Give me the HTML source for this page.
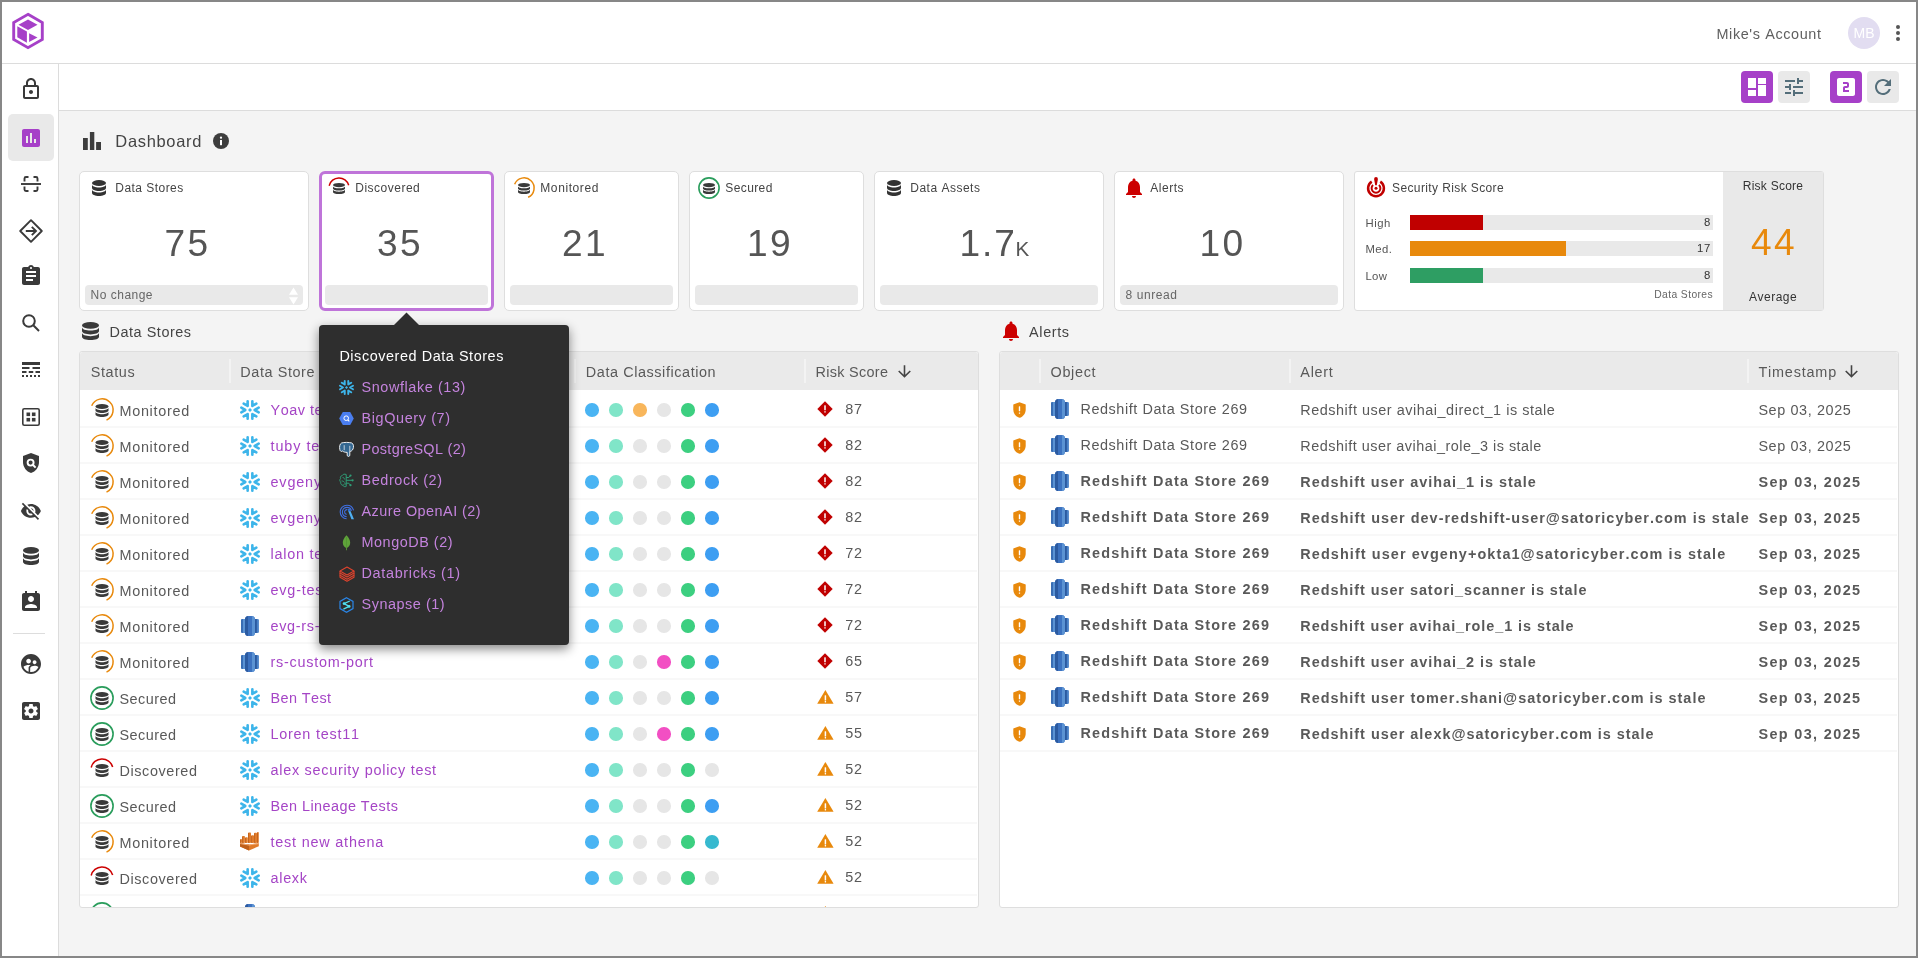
<!DOCTYPE html>
<html><head><meta charset="utf-8"><title>Dashboard</title>
<style>
html,body{margin:0;padding:0;width:1918px;height:958px;overflow:hidden;background:#f4f4f4}
body{position:relative;font-family:"Liberation Sans",sans-serif}
.bx,.tx,.ic,.clip{position:absolute}
.clip{left:0;top:0;width:1918px;height:958px}
.tx{white-space:nowrap;line-height:1;font-kerning:none}
.ic{overflow:visible}
</style></head><body><div id="root" style="position:absolute;left:0;top:0;width:1918px;height:958px;will-change:transform">
<div class="bx" style="left:0px;top:0px;width:1918px;height:958px;background:#878787"></div>
<div class="bx" style="left:2px;top:2px;width:1914px;height:954px;background:#f4f4f4"></div>
<div class="bx" style="left:2px;top:2px;width:1914px;height:61px;background:#fff"></div>
<div class="bx" style="left:2px;top:63px;width:1914px;height:1px;background:#dcdcdc"></div>
<div class="bx" style="left:2px;top:64px;width:56px;height:892px;background:#fff"></div>
<div class="bx" style="left:58px;top:64px;width:1px;height:892px;background:#dcdcdc"></div>
<div class="bx" style="left:59px;top:64px;width:1857px;height:46px;background:#fff"></div>
<div class="bx" style="left:59px;top:110px;width:1857px;height:1px;background:#dcdcdc"></div>
<svg class="ic" style="left:12px;top:13px" width="32" height="36" viewBox="0 0 32 36"><path d="M16 1.3L30.3 9.5V26.5L16 34.7L1.7 26.5V9.5Z" fill="none" stroke="#a640c8" stroke-width="2.9"/><path d="M16 6.5L25.5 11.8L16 17L6.5 11.8Z" fill="#a640c8"/><path d="M5.3 13.2L14.9 18.5V29.8L5.3 24.3Z" fill="#a640c8"/><path d="M17.1 20.2L25.5 24.5L17.1 29Z" fill="#a640c8"/></svg>
<div class="tx " style="left:1716.50px;top:26.79px;font-size:14.42px;letter-spacing:0.613px;color:#5f5f5f;">Mike's Account</div>
<div class="bx" style="left:1848px;top:17px;width:32px;height:32px;border-radius:50%;background:#e2ddf1"></div>
<div class="tx " style="left:1853.47px;top:26.14px;font-size:14.01px;letter-spacing:0.025px;color:#ffffff;">MB</div>
<div class="bx" style="left:1896px;top:25px;width:4px;height:4px;border-radius:50%;background:#555"></div>
<div class="bx" style="left:1896px;top:31px;width:4px;height:4px;border-radius:50%;background:#555"></div>
<div class="bx" style="left:1896px;top:37px;width:4px;height:4px;border-radius:50%;background:#555"></div>
<div class="bx" style="left:1741px;top:71px;width:32px;height:32px;background:#a640c8;border-radius:4px"></div>
<div class="bx" style="left:1778px;top:71px;width:32px;height:32px;background:#e9e9e9;border-radius:4px"></div>
<div class="bx" style="left:1830px;top:71px;width:32px;height:32px;background:#a640c8;border-radius:4px"></div>
<div class="bx" style="left:1867px;top:71px;width:32px;height:32px;background:#e9e9e9;border-radius:4px"></div>
<svg class="ic" style="left:1745px;top:75px" width="24" height="24" viewBox="0 0 24 24"><path d="M3 13h8V3H3v10zm0 8h8v-6H3v6zm10 0h8V10h-8v11zm0-18v6h8V3h-8z" fill="#fff"/></svg>
<svg class="ic" style="left:1782px;top:75px" width="24" height="24" viewBox="0 0 24 24"><path d="M3 17v2h6v-2H3zM3 5v2h10V5H3zm10 16v-2h8v-2h-8v-2h-2v6h2zM7 9v2H3v2h4v2h2V9H7zm14 4v-2H11v2h10zm-6-4h2V7h4V5h-4V3h-2v6z" fill="#546e7a"/></svg>
<svg class="ic" style="left:1834px;top:75px" width="24" height="24" viewBox="0 0 24 24"><path d="M19 3H5c-1.1 0-2 .9-2 2v14c0 1.1.9 2 2 2h14c1.1 0 2-.9 2-2V5c0-1.1-.9-2-2-2zm-4 8c0 1.11-.9 2-2 2h-2v2h4v2H9v-4c0-1.11.9-2 2-2h2V9H9V7h4c1.1 0 2 .89 2 2v2z" fill="#fff"/></svg>
<svg class="ic" style="left:1871px;top:75px" width="24" height="24" viewBox="0 0 24 24"><path d="M17.65 6.35C16.2 4.9 14.21 4 12 4c-4.42 0-7.99 3.58-7.99 8s3.57 8 7.99 8c3.73 0 6.84-2.55 7.73-6h-2.08c-.82 2.33-3.04 4-5.65 4-3.31 0-6-2.69-6-6s2.69-6 6-6c1.66 0 3.14.69 4.22 1.78L13 11h7V4l-2.35 2.35z" fill="#546e7a"/></svg>
<div class="bx" style="left:8px;top:114px;width:46px;height:47px;background:#e9e9e9;border-radius:5px"></div>
<svg class="ic" style="left:18.5px;top:77px" width="24" height="24" viewBox="0 0 24 24"><path d="M18 8h-1V6c0-2.76-2.24-5-5-5S7 3.24 7 6v2H6c-1.1 0-2 .9-2 2v10c0 1.1.9 2 2 2h12c1.1 0 2-.9 2-2V10c0-1.1-.9-2-2-2zM9 6c0-1.66 1.34-3 3-3s3 1.34 3 3v2H9V6zm9 14H6V10h12v10zm-6-3c1.1 0 2-.9 2-2s-.9-2-2-2-2 .9-2 2 .9 2 2 2z" fill="#3a3a3a"/></svg>
<svg class="ic" style="left:19px;top:126px" width="24" height="24" viewBox="0 0 24 24"><path d="M19 3H5c-1.1 0-2 .9-2 2v14c0 1.1.9 2 2 2h14c1.1 0 2-.9 2-2V5c0-1.1-.9-2-2-2zM9 17H7v-7h2v7zm4 0h-2V7h2v10zm4 0h-2v-4h2v4z" fill="#a640c8"/></svg>
<svg class="ic" style="left:19px;top:172px" width="24" height="24" viewBox="0 0 24 24"><g fill="none" stroke="#3a3a3a" stroke-width="1.9"><path d="M5.5 9.5V6.5Q5.5 5 7 5H9.5M14.5 5H17Q18.5 5 18.5 6.5V9.5M18.5 14.5V17.5Q18.5 19 17 19H14.5M9.5 19H7Q5.5 19 5.5 17.5V14.5"/><path d="M2 12H22"/></g></svg>
<svg class="ic" style="left:19px;top:219px" width="24" height="24" viewBox="0 0 24 24"><g fill="none" stroke="#3a3a3a" stroke-width="2"><path d="M12 1.2L22.8 12L12 22.8L1.2 12Z" stroke-linejoin="round" stroke-width="1.9"/><path d="M6.8 12H17M12.8 7.8L17 12L12.8 16.2" stroke-width="1.9"/></g></svg>
<svg class="ic" style="left:19px;top:264px" width="24" height="24" viewBox="0 0 24 24"><path d="M19 3h-4.18C14.4 1.84 13.3 1 12 1c-1.3 0-2.4.84-2.82 2H5c-1.1 0-2 .9-2 2v14c0 1.1.9 2 2 2h14c1.1 0 2-.9 2-2V5c0-1.1-.9-2-2-2zm-7 0c.55 0 1 .45 1 1s-.45 1-1 1-1-.45-1-1 .45-1 1-1zm2 14H7v-2h7v2zm3-4H7v-2h10v2zm0-4H7V7h10v2z" fill="#3a3a3a"/></svg>
<svg class="ic" style="left:19px;top:311px" width="24" height="24" viewBox="0 0 24 24"><g fill="none" stroke="#3a3a3a" stroke-width="2"><circle cx="10" cy="10" r="5.8"/><path d="M14.3 14.3L20 20"/></g></svg>
<svg class="ic" style="left:19px;top:358px" width="24" height="24" viewBox="0 0 24 24"><g fill="#3a3a3a"><rect x="3" y="4" width="18" height="3"/><rect x="3" y="9" width="7.5" height="2"/><rect x="13.5" y="9" width="7.5" height="2"/><rect x="3" y="13" width="4.5" height="2"/><rect x="9.75" y="13" width="4.5" height="2"/><rect x="16.5" y="13" width="4.5" height="2"/><rect x="3" y="17" width="2" height="2"/><rect x="7" y="17" width="2" height="2"/><rect x="11" y="17" width="2" height="2"/><rect x="15" y="17" width="2" height="2"/><rect x="19" y="17" width="2" height="2"/></g></svg>
<svg class="ic" style="left:19px;top:405px" width="24" height="24" viewBox="0 0 24 24"><rect x="3.8" y="3.8" width="16.4" height="16.4" rx="1.5" fill="none" stroke="#3a3a3a" stroke-width="1.6"/><g fill="#3a3a3a"><rect x="7.5" y="7.5" width="3.6" height="3.6"/><rect x="12.9" y="7.5" width="3.6" height="3.6"/><rect x="7.5" y="12.9" width="3.6" height="3.6"/><rect x="12.9" y="12.9" width="3.6" height="3.6"/></g></svg>
<svg class="ic" style="left:19px;top:451px" width="24" height="24" viewBox="0 0 24 24"><path d="M12 2L4 5v6.09c0 5.05 3.41 9.76 8 10.91 4.59-1.15 8-5.86 8-10.91V5l-8-3z" fill="#3a3a3a"/><circle cx="11.6" cy="11.6" r="3" fill="none" stroke="#fff" stroke-width="1.9"/><path d="M13.8 13.8L16.6 16.6" stroke="#fff" stroke-width="2"/></svg>
<svg class="ic" style="left:20.1px;top:500.1px" width="21.8" height="21.8" viewBox="0 0 24 24"><path d="M12 7c2.76 0 5 2.24 5 5 0 .65-.13 1.26-.36 1.83l2.92 2.92c1.51-1.26 2.7-2.89 3.43-4.75-1.73-4.39-6-7.5-11-7.5-1.4 0-2.74.25-3.98.7l2.16 2.16C10.74 7.13 11.35 7 12 7zM2 4.27l2.28 2.28.46.46C3.08 8.3 1.78 10.02 1 12c1.73 4.39 6 7.5 11 7.5 1.55 0 3.03-.3 4.38-.84l.42.42L19.73 22 21 20.73 3.27 3 2 4.27zM7.53 9.8l1.55 1.55c-.05.21-.08.43-.08.65 0 1.66 1.34 3 3 3 .22 0 .44-.03.65-.08l1.55 1.55c-.67.33-1.41.53-2.2.53-2.76 0-5-2.24-5-5 0-.79.2-1.53.53-2.2zm4.31-.78l3.15 3.15.02-.16c0-1.66-1.34-3-3-3l-.17.01z" fill="#3a3a3a"/></svg>
<svg class="ic" style="left:23px;top:547px" width="16" height="18" viewBox="0 0 14 16" preserveAspectRatio="none"><g fill="#3a3a3a"><ellipse cx="7" cy="3" rx="7" ry="3"/><path d="M0 4.6C0 6.26 3.13 7.6 7 7.6S14 6.26 14 4.6V8C14 9.66 10.87 11 7 11S0 9.66 0 8Z"/><path d="M0 9.6C0 11.26 3.13 12.6 7 12.6S14 11.26 14 9.6V13C14 14.66 10.87 16 7 16S0 14.66 0 13Z"/></g></svg>
<svg class="ic" style="left:19px;top:590px" width="24" height="24" viewBox="0 0 24 24"><path d="M19 3h-1V1h-2v2H8V1H6v2H5c-1.11 0-2 .9-2 2v14c0 1.1.89 2 2 2h14c1.1 0 2-.9 2-2V5c0-1.1-.9-2-2-2zm-7 3c1.66 0 3 1.34 3 3s-1.34 3-3 3-3-1.34-3-3 1.34-3 3-3zm6 12H6v-1c0-2 4-3.1 6-3.1s6 1.1 6 3.1v1z" fill="#3a3a3a"/></svg>
<div class="bx" style="left:13px;top:633px;width:32px;height:1px;background:#dddddd"></div>
<svg class="ic" style="left:19px;top:652px" width="24" height="24" viewBox="0 0 24 24"><path d="M11.99 2c-5.52 0-10 4.48-10 10s4.48 10 10 10 10-4.48 10-10-4.48-10-10-10zm3.61 6.34c1.07 0 1.93.86 1.93 1.93 0 1.07-.86 1.93-1.93 1.93-1.07 0-1.930-.86-1.93-1.93-.01-1.07.86-1.93 1.93-1.93zm-6-1.58c1.3 0 2.36 1.06 2.36 2.36 0 1.3-1.06 2.36-2.36 2.36s-2.36-1.060-2.36-2.36c0-1.31 1.05-2.36 2.36-2.36zm0 9.13v3.75c-2.4-.75-4.3-2.6-5.14-4.96 1.05-1.12 3.67-1.69 5.14-1.69.53 0 1.2.08 1.9.22-1.64.87-1.9 2.02-1.9 2.68zM11.99 20c-.27 0-.53-.01-.79-.04v-4.07c0-1.42 2.94-2.13 4.4-2.13 1.07 0 2.92.39 3.84 1.15-1.17 2.97-4.06 5.09-7.45 5.09z" fill="#3a3a3a"/></svg>
<svg class="ic" style="left:19px;top:699px" width="24" height="24" viewBox="0 0 24 24"><path d="M19 3H5c-1.11 0-2 .9-2 2v14c0 1.1.89 2 2 2h14c1.11 0 2-.9 2-2V5c0-1.1-.89-2-2-2zm-1.75 9c0 .23-.02.46-.05.68l1.48 1.16c.13.11.17.3.08.45l-1.4 2.42c-.09.15-.27.21-.43.15l-1.74-.7c-.36.28-.76.51-1.18.69l-.26 1.85c-.03.17-.18.3-.35.3h-2.8c-.17 0-.32-.13-.35-.29l-.26-1.85c-.43-.18-.82-.41-1.18-.69l-1.74.7c-.16.06-.34 0-.43-.15l-1.4-2.42c-.09-.15-.05-.34.08-.45l1.48-1.16c-.03-.23-.05-.46-.05-.69 0-.23.02-.46.05-.68l-1.48-1.16c-.13-.11-.17-.3-.08-.45l1.4-2.42c.09-.15.27-.21.43-.15l1.74.7c.36-.28.76-.51 1.18-.69l.26-1.85c.03-.17.18-.3.35-.3h2.8c.17 0 .32.13.35.29l.26 1.85c.43.18.82.41 1.18.69l1.74-.7c.16-.06.34 0 .43.15l1.4 2.42c.09.15.05.34-.08.45l-1.48 1.16c.03.23.05.46.05.69zM12 9.5c-1.38 0-2.5 1.12-2.5 2.5s1.12 2.5 2.5 2.5 2.5-1.12 2.5-2.5-1.12-2.5-2.5-2.5z" fill="#3a3a3a"/></svg>
<svg class="ic" style="left:83px;top:132px" width="18" height="18" viewBox="0 0 18 18"><g fill="#3d3d3d"><rect x="0" y="6" width="4.8" height="12"/><rect x="6.9" y="0" width="4.4" height="18"/><rect x="13.1" y="10" width="4.9" height="8"/></g></svg>
<div class="tx " style="left:115.30px;top:133.05px;font-size:16.48px;letter-spacing:0.687px;color:#444;">Dashboard</div>
<svg class="ic" style="left:213px;top:133px" width="16" height="16" viewBox="0 0 16 16"><circle cx="8" cy="8" r="8" fill="#3d3d3d"/><rect x="7" y="7" width="2" height="5.2" fill="#fff"/><circle cx="8" cy="4.7" r="1.15" fill="#fff"/></svg>
<div class="bx" style="left:79px;top:171px;width:230px;height:140px;background:#fff;border:1px solid #dedede;border-radius:5px;box-sizing:border-box"></div>
<div class="tx " style="left:115.30px;top:181.84px;font-size:12.00px;letter-spacing:0.456px;color:#444;">Data Stores</div>
<svg class="ic" style="left:92px;top:180px" width="14" height="16" viewBox="0 0 14 16" preserveAspectRatio="none"><g fill="#333"><ellipse cx="7" cy="3" rx="7" ry="3"/><path d="M0 4.6C0 6.26 3.13 7.6 7 7.6S14 6.26 14 4.6V8C14 9.66 10.87 11 7 11S0 9.66 0 8Z"/><path d="M0 9.6C0 11.26 3.13 12.6 7 12.6S14 11.26 14 9.6V13C14 14.66 10.87 16 7 16S0 14.66 0 13Z"/></g></svg>
<div class="bx" style="left:85px;top:285px;width:218px;height:20px;background:#e9e9e9;border-radius:4px"></div>
<div class="tx " style="left:164.59px;top:224.61px;font-size:37.08px;letter-spacing:2.282px;color:#555;">75</div>
<div class="bx" style="left:319px;top:171px;width:175px;height:140px;background:#fff;border:3px solid #bf74d9;border-radius:6px;box-sizing:border-box"></div>
<div class="tx " style="left:355.30px;top:181.84px;font-size:12.00px;letter-spacing:0.495px;color:#444;">Discovered</div>
<svg class="ic" style="left:328.0px;top:177.0px" width="22" height="22" viewBox="0 0 22 22"><path d="M1.16 8.73A10.1 10.1 0 0 1 20.71 8.22" fill="none" stroke="#cc0000" stroke-width="1.5"/><g transform="translate(5.0,6.0) scale(0.8571428571428571,0.6875)" fill="#3a3a3a"><ellipse cx="7" cy="3" rx="7" ry="3"/><path d="M0 4.6C0 6.26 3.13 7.6 7 7.6S14 6.26 14 4.6V8C14 9.66 10.87 11 7 11S0 9.66 0 8Z"/><path d="M0 9.6C0 11.26 3.13 12.6 7 12.6S14 11.26 14 9.6V13C14 14.66 10.87 16 7 16S0 14.66 0 13Z"/></g></svg>
<div class="bx" style="left:325px;top:285px;width:163px;height:20px;background:#e9e9e9;border-radius:4px"></div>
<div class="tx " style="left:377.10px;top:224.61px;font-size:37.08px;letter-spacing:2.282px;color:#555;">35</div>
<div class="bx" style="left:504px;top:171px;width:175px;height:140px;background:#fff;border:1px solid #dedede;border-radius:5px;box-sizing:border-box"></div>
<div class="tx " style="left:540.30px;top:181.84px;font-size:12.00px;letter-spacing:0.581px;color:#444;">Monitored</div>
<svg class="ic" style="left:513.0px;top:177.0px" width="22" height="22" viewBox="0 0 22 22"><path d="M1.64 7.22A10.1 10.1 0 1 1 15.11 20.23" fill="none" stroke="#e8890c" stroke-width="1.5"/><g transform="translate(5.0,6.0) scale(0.8571428571428571,0.6875)" fill="#3a3a3a"><ellipse cx="7" cy="3" rx="7" ry="3"/><path d="M0 4.6C0 6.26 3.13 7.6 7 7.6S14 6.26 14 4.6V8C14 9.66 10.87 11 7 11S0 9.66 0 8Z"/><path d="M0 9.6C0 11.26 3.13 12.6 7 12.6S14 11.26 14 9.6V13C14 14.66 10.87 16 7 16S0 14.66 0 13Z"/></g></svg>
<div class="bx" style="left:510px;top:285px;width:163px;height:20px;background:#e9e9e9;border-radius:4px"></div>
<div class="tx " style="left:562.10px;top:224.61px;font-size:37.08px;letter-spacing:2.282px;color:#555;">21</div>
<div class="bx" style="left:689px;top:171px;width:175px;height:140px;background:#fff;border:1px solid #dedede;border-radius:5px;box-sizing:border-box"></div>
<div class="tx " style="left:725.30px;top:181.84px;font-size:12.00px;letter-spacing:0.393px;color:#444;">Secured</div>
<svg class="ic" style="left:698.0px;top:177.0px" width="22" height="22" viewBox="0 0 22 22"><circle cx="11.0" cy="11.0" r="10.1" fill="none" stroke="#2a9d5c" stroke-width="1.6"/><g transform="translate(5.0,6.0) scale(0.8571428571428571,0.6875)" fill="#3a3a3a"><ellipse cx="7" cy="3" rx="7" ry="3"/><path d="M0 4.6C0 6.26 3.13 7.6 7 7.6S14 6.26 14 4.6V8C14 9.66 10.87 11 7 11S0 9.66 0 8Z"/><path d="M0 9.6C0 11.26 3.13 12.6 7 12.6S14 11.26 14 9.6V13C14 14.66 10.87 16 7 16S0 14.66 0 13Z"/></g></svg>
<div class="bx" style="left:695px;top:285px;width:163px;height:20px;background:#e9e9e9;border-radius:4px"></div>
<div class="tx " style="left:747.10px;top:224.61px;font-size:37.08px;letter-spacing:2.282px;color:#555;">19</div>
<div class="bx" style="left:874px;top:171px;width:230px;height:140px;background:#fff;border:1px solid #dedede;border-radius:5px;box-sizing:border-box"></div>
<div class="tx " style="left:910.30px;top:181.84px;font-size:12.00px;letter-spacing:0.491px;color:#444;">Data Assets</div>
<svg class="ic" style="left:887px;top:180px" width="14" height="16" viewBox="0 0 14 16" preserveAspectRatio="none"><g fill="#333"><ellipse cx="7" cy="3" rx="7" ry="3"/><path d="M0 4.6C0 6.26 3.13 7.6 7 7.6S14 6.26 14 4.6V8C14 9.66 10.87 11 7 11S0 9.66 0 8Z"/><path d="M0 9.6C0 11.26 3.13 12.6 7 12.6S14 11.26 14 9.6V13C14 14.66 10.87 16 7 16S0 14.66 0 13Z"/></g></svg>
<div class="bx" style="left:880px;top:285px;width:218px;height:20px;background:#e9e9e9;border-radius:4px"></div>
<div class="tx " style="left:959.50px;top:224.61px;font-size:37.08px;letter-spacing:1.902px;color:#555;">1.7</div>
<div class="tx " style="left:1015.50px;top:238.56px;font-size:20.60px;letter-spacing:-0.625px;color:#555;">K</div>
<div class="bx" style="left:1114px;top:171px;width:230px;height:140px;background:#fff;border:1px solid #dedede;border-radius:5px;box-sizing:border-box"></div>
<div class="tx " style="left:1150.30px;top:181.84px;font-size:12.00px;letter-spacing:0.521px;color:#444;">Alerts</div>
<svg class="ic" style="left:1122px;top:176px" width="24" height="24" viewBox="0 0 24 24"><path d="M12 22c1.1 0 2-.9 2-2h-4c0 1.1.89 2 2 2zm6-6v-5c0-3.07-1.64-5.64-4.5-6.32V4c0-.83-.67-1.5-1.5-1.5s-1.5.67-1.5 1.5v.68C7.63 5.36 6 7.92 6 11v5l-2 2v1h16v-1l-2-2z" fill="#cc0000"/></svg>
<div class="bx" style="left:1120px;top:285px;width:218px;height:20px;background:#e9e9e9;border-radius:4px"></div>
<div class="tx " style="left:1199.60px;top:224.61px;font-size:37.08px;letter-spacing:2.282px;color:#555;">10</div>
<div class="tx " style="left:90.60px;top:288.84px;font-size:12.00px;letter-spacing:0.487px;color:#666;">No change</div>
<svg class="ic" style="left:288px;top:287px" width="11" height="18" viewBox="0 0 11 18"><path d="M5.5 0.5L10 7.8H1Z M5.5 17.5L10 10.2H1Z" fill="#fff"/></svg>
<div class="tx " style="left:1125.50px;top:288.84px;font-size:12.00px;letter-spacing:0.593px;color:#666;">8 unread</div>
<div class="bx" style="left:1354px;top:171px;width:470px;height:140px;background:#fff;border:1px solid #dedede;border-radius:3px;box-sizing:border-box"></div>
<div class="bx" style="left:1723px;top:172px;width:100px;height:138px;background:#e9e9e9"></div>
<svg class="ic" style="left:1366px;top:177px" width="20" height="21" viewBox="0 0 20 21"><g fill="none" stroke="#c00000"><path d="M14.30 4.67A7.9 7.9 0 1 1 5.70 4.67" stroke-width="2.5"/><path d="M12.94 8.03A4.4 4.4 0 1 1 7.06 8.03" stroke-width="2"/></g><circle cx="10" cy="11.3" r="1.5" fill="#c00000"/><path d="M8.1 1.9Q8.1 0 10 0Q11.9 0 11.9 1.9L10.8 8.2H9.2Z" fill="#c00000"/></svg>
<div class="tx " style="left:1392.00px;top:181.84px;font-size:12.00px;letter-spacing:0.386px;color:#444;">Security Risk Score</div>
<div class="bx" style="left:1410px;top:215px;width:303px;height:15px;background:#e9e9e9"></div>
<div class="bx" style="left:1410px;top:215px;width:73px;height:15px;background:#c00000"></div>
<div class="tx " style="left:1365.50px;top:218.21px;font-size:11.33px;letter-spacing:0.495px;color:#555;">High</div>
<div class="tx " style="left:1704.00px;top:216.91px;font-size:11.33px;letter-spacing:0.697px;color:#333;">8</div>
<div class="bx" style="left:1410px;top:241px;width:303px;height:15px;background:#e9e9e9"></div>
<div class="bx" style="left:1410px;top:241px;width:156px;height:15px;background:#e8890c"></div>
<div class="tx " style="left:1365.50px;top:244.21px;font-size:11.33px;letter-spacing:0.387px;color:#555;">Med.</div>
<div class="tx " style="left:1697.00px;top:242.91px;font-size:11.33px;letter-spacing:0.697px;color:#333;">17</div>
<div class="bx" style="left:1410px;top:268px;width:303px;height:15px;background:#e9e9e9"></div>
<div class="bx" style="left:1410px;top:268px;width:73px;height:15px;background:#2e9e63"></div>
<div class="tx " style="left:1365.50px;top:271.21px;font-size:11.33px;letter-spacing:0.292px;color:#555;">Low</div>
<div class="tx " style="left:1704.00px;top:269.91px;font-size:11.33px;letter-spacing:0.697px;color:#333;">8</div>
<div class="tx " style="left:1654.30px;top:290.28px;font-size:10.30px;letter-spacing:0.392px;color:#666;">Data Stores</div>
<div class="tx " style="left:1742.76px;top:180.34px;font-size:12.00px;letter-spacing:0.247px;color:#333;">Risk Score</div>
<div class="tx " style="left:1751.10px;top:223.61px;font-size:37.08px;letter-spacing:2.282px;color:#e8890c;">44</div>
<div class="tx " style="left:1749.08px;top:290.84px;font-size:12.00px;letter-spacing:0.480px;color:#333;">Average</div>
<svg class="ic" style="left:82px;top:322px" width="17" height="18" viewBox="0 0 14 16" preserveAspectRatio="none"><g fill="#3a3a3a"><ellipse cx="7" cy="3" rx="7" ry="3"/><path d="M0 4.6C0 6.26 3.13 7.6 7 7.6S14 6.26 14 4.6V8C14 9.66 10.87 11 7 11S0 9.66 0 8Z"/><path d="M0 9.6C0 11.26 3.13 12.6 7 12.6S14 11.26 14 9.6V13C14 14.66 10.87 16 7 16S0 14.66 0 13Z"/></g></svg>
<div class="tx " style="left:109.50px;top:325.09px;font-size:14.42px;letter-spacing:0.548px;color:#444;">Data Stores</div>
<svg class="ic" style="left:999px;top:319px" width="24" height="24" viewBox="0 0 24 24"><path d="M12 22c1.1 0 2-.9 2-2h-4c0 1.1.89 2 2 2zm6-6v-5c0-3.07-1.64-5.64-4.5-6.32V4c0-.83-.67-1.5-1.5-1.5s-1.5.67-1.5 1.5v.68C7.63 5.36 6 7.92 6 11v5l-2 2v1h16v-1l-2-2z" fill="#cc0000"/></svg>
<div class="tx " style="left:1029.10px;top:324.79px;font-size:14.42px;letter-spacing:0.626px;color:#444;">Alerts</div>
<div class="bx" style="left:79px;top:351px;width:900px;height:557px;background:#fff;border:1px solid #dedede;border-radius:3px;box-sizing:border-box;overflow:hidden"></div>
<div class="bx" style="left:80px;top:352px;width:898px;height:38px;background:#eaeaea;border-radius:3px 3px 0 0"></div>
<div class="bx" style="left:229px;top:359px;width:2px;height:24px;background:#f3f3f3"></div>
<div class="bx" style="left:574px;top:359px;width:2px;height:24px;background:#f3f3f3"></div>
<div class="bx" style="left:804px;top:359px;width:2px;height:24px;background:#f3f3f3"></div>
<div class="tx " style="left:90.70px;top:364.79px;font-size:14.42px;letter-spacing:0.622px;color:#595959;">Status</div>
<div class="tx " style="left:240.30px;top:364.79px;font-size:14.42px;letter-spacing:0.595px;color:#595959;">Data Store</div>
<div class="tx " style="left:585.80px;top:364.79px;font-size:14.42px;letter-spacing:0.584px;color:#595959;">Data Classification</div>
<div class="tx " style="left:815.60px;top:364.79px;font-size:14.42px;letter-spacing:0.297px;color:#595959;">Risk Score</div>
<svg class="ic" style="left:895px;top:362px" width="19" height="19" viewBox="0 0 24 24"><path d="M20 12l-1.41-1.41L13 16.17V4h-2v12.17l-5.58-5.59L4 12l8 8 8-8z" fill="#444"/></svg>
<div class="clip" style="clip-path:inset(390px 940px 51px 80px)"><div class="bx" style="left:80px;top:426px;width:897px;height:2px;background:#f8f8f8"></div><svg class="ic" style="left:90.0px;top:397.5px" width="24" height="24" viewBox="0 0 24 24"><path d="M1.71 7.84A11.1 11.1 0 1 1 16.51 22.14" fill="none" stroke="#e8890c" stroke-width="1.5"/><g transform="translate(5.5,6.0) scale(0.9285714285714286,0.8125)" fill="#3a3a3a"><ellipse cx="7" cy="3" rx="7" ry="3"/><path d="M0 4.6C0 6.26 3.13 7.6 7 7.6S14 6.26 14 4.6V8C14 9.66 10.87 11 7 11S0 9.66 0 8Z"/><path d="M0 9.6C0 11.26 3.13 12.6 7 12.6S14 11.26 14 9.6V13C14 14.66 10.87 16 7 16S0 14.66 0 13Z"/></g></svg><div class="tx " style="left:119.50px;top:403.79px;font-size:14.42px;letter-spacing:0.698px;color:#595959;">Monitored</div><svg class="ic" style="left:240px;top:400px" width="20" height="20" viewBox="0 0 20 20"><g><path transform="rotate(0 10 10)" d="M18.68 7.7L14.7 10L18.68 12.3" fill="none" stroke="#3db5ea" stroke-width="2.6" stroke-linecap="round" stroke-linejoin="round"/><path transform="rotate(60 10 10)" d="M18.68 7.7L14.7 10L18.68 12.3" fill="none" stroke="#3db5ea" stroke-width="2.6" stroke-linecap="round" stroke-linejoin="round"/><path transform="rotate(120 10 10)" d="M18.68 7.7L14.7 10L18.68 12.3" fill="none" stroke="#3db5ea" stroke-width="2.6" stroke-linecap="round" stroke-linejoin="round"/><path transform="rotate(180 10 10)" d="M18.68 7.7L14.7 10L18.68 12.3" fill="none" stroke="#3db5ea" stroke-width="2.6" stroke-linecap="round" stroke-linejoin="round"/><path transform="rotate(240 10 10)" d="M18.68 7.7L14.7 10L18.68 12.3" fill="none" stroke="#3db5ea" stroke-width="2.6" stroke-linecap="round" stroke-linejoin="round"/><path transform="rotate(300 10 10)" d="M18.68 7.7L14.7 10L18.68 12.3" fill="none" stroke="#3db5ea" stroke-width="2.6" stroke-linecap="round" stroke-linejoin="round"/></g><path d="M10 8L12 10L10 12L8 10Z" fill="#3db5ea"/></svg><div class="tx " style="left:270.50px;top:402.79px;font-size:14.42px;letter-spacing:0.518px;color:#a545c6;">Yoav test</div><div class="bx" style="left:585.2px;top:403.3px;width:13.6px;height:13.6px;border-radius:50%;background:#4ab4f3"></div><div class="bx" style="left:609.2px;top:403.3px;width:13.6px;height:13.6px;border-radius:50%;background:#80e5c8"></div><div class="bx" style="left:633.2px;top:403.3px;width:13.6px;height:13.6px;border-radius:50%;background:#f8b65b"></div><div class="bx" style="left:657.2px;top:403.3px;width:13.6px;height:13.6px;border-radius:50%;background:#e6e6e6"></div><div class="bx" style="left:681.2px;top:403.3px;width:13.6px;height:13.6px;border-radius:50%;background:#3ccf80"></div><div class="bx" style="left:705.2px;top:403.3px;width:13.6px;height:13.6px;border-radius:50%;background:#3d9ef2"></div><svg class="ic" style="left:817px;top:401px" width="16" height="16" viewBox="0 0 16 16"><path d="M8 0.3L15.7 8L8 15.7L0.3 8Z" fill="#c00000"/><rect x="7.25" y="4.3" width="1.5" height="4.9" rx="0.5" fill="#fff"/><rect x="7.25" y="10.2" width="1.5" height="1.4" rx="0.4" fill="#fff"/></svg><div class="tx " style="left:845.20px;top:401.79px;font-size:14.42px;letter-spacing:0.888px;color:#595959;">87</div><div class="bx" style="left:80px;top:462px;width:897px;height:2px;background:#f8f8f8"></div><svg class="ic" style="left:90.0px;top:433.5px" width="24" height="24" viewBox="0 0 24 24"><path d="M1.71 7.84A11.1 11.1 0 1 1 16.51 22.14" fill="none" stroke="#e8890c" stroke-width="1.5"/><g transform="translate(5.5,6.0) scale(0.9285714285714286,0.8125)" fill="#3a3a3a"><ellipse cx="7" cy="3" rx="7" ry="3"/><path d="M0 4.6C0 6.26 3.13 7.6 7 7.6S14 6.26 14 4.6V8C14 9.66 10.87 11 7 11S0 9.66 0 8Z"/><path d="M0 9.6C0 11.26 3.13 12.6 7 12.6S14 11.26 14 9.6V13C14 14.66 10.87 16 7 16S0 14.66 0 13Z"/></g></svg><div class="tx " style="left:119.50px;top:439.79px;font-size:14.42px;letter-spacing:0.698px;color:#595959;">Monitored</div><svg class="ic" style="left:240px;top:436px" width="20" height="20" viewBox="0 0 20 20"><g><path transform="rotate(0 10 10)" d="M18.68 7.7L14.7 10L18.68 12.3" fill="none" stroke="#3db5ea" stroke-width="2.6" stroke-linecap="round" stroke-linejoin="round"/><path transform="rotate(60 10 10)" d="M18.68 7.7L14.7 10L18.68 12.3" fill="none" stroke="#3db5ea" stroke-width="2.6" stroke-linecap="round" stroke-linejoin="round"/><path transform="rotate(120 10 10)" d="M18.68 7.7L14.7 10L18.68 12.3" fill="none" stroke="#3db5ea" stroke-width="2.6" stroke-linecap="round" stroke-linejoin="round"/><path transform="rotate(180 10 10)" d="M18.68 7.7L14.7 10L18.68 12.3" fill="none" stroke="#3db5ea" stroke-width="2.6" stroke-linecap="round" stroke-linejoin="round"/><path transform="rotate(240 10 10)" d="M18.68 7.7L14.7 10L18.68 12.3" fill="none" stroke="#3db5ea" stroke-width="2.6" stroke-linecap="round" stroke-linejoin="round"/><path transform="rotate(300 10 10)" d="M18.68 7.7L14.7 10L18.68 12.3" fill="none" stroke="#3db5ea" stroke-width="2.6" stroke-linecap="round" stroke-linejoin="round"/></g><path d="M10 8L12 10L10 12L8 10Z" fill="#3db5ea"/></svg><div class="tx " style="left:270.50px;top:438.79px;font-size:14.42px;letter-spacing:0.930px;color:#a545c6;">tuby test</div><div class="bx" style="left:585.2px;top:439.3px;width:13.6px;height:13.6px;border-radius:50%;background:#4ab4f3"></div><div class="bx" style="left:609.2px;top:439.3px;width:13.6px;height:13.6px;border-radius:50%;background:#80e5c8"></div><div class="bx" style="left:633.2px;top:439.3px;width:13.6px;height:13.6px;border-radius:50%;background:#e6e6e6"></div><div class="bx" style="left:657.2px;top:439.3px;width:13.6px;height:13.6px;border-radius:50%;background:#e6e6e6"></div><div class="bx" style="left:681.2px;top:439.3px;width:13.6px;height:13.6px;border-radius:50%;background:#3ccf80"></div><div class="bx" style="left:705.2px;top:439.3px;width:13.6px;height:13.6px;border-radius:50%;background:#3d9ef2"></div><svg class="ic" style="left:817px;top:437px" width="16" height="16" viewBox="0 0 16 16"><path d="M8 0.3L15.7 8L8 15.7L0.3 8Z" fill="#c00000"/><rect x="7.25" y="4.3" width="1.5" height="4.9" rx="0.5" fill="#fff"/><rect x="7.25" y="10.2" width="1.5" height="1.4" rx="0.4" fill="#fff"/></svg><div class="tx " style="left:845.20px;top:437.79px;font-size:14.42px;letter-spacing:0.888px;color:#595959;">82</div><div class="bx" style="left:80px;top:498px;width:897px;height:2px;background:#f8f8f8"></div><svg class="ic" style="left:90.0px;top:469.5px" width="24" height="24" viewBox="0 0 24 24"><path d="M1.71 7.84A11.1 11.1 0 1 1 16.51 22.14" fill="none" stroke="#e8890c" stroke-width="1.5"/><g transform="translate(5.5,6.0) scale(0.9285714285714286,0.8125)" fill="#3a3a3a"><ellipse cx="7" cy="3" rx="7" ry="3"/><path d="M0 4.6C0 6.26 3.13 7.6 7 7.6S14 6.26 14 4.6V8C14 9.66 10.87 11 7 11S0 9.66 0 8Z"/><path d="M0 9.6C0 11.26 3.13 12.6 7 12.6S14 11.26 14 9.6V13C14 14.66 10.87 16 7 16S0 14.66 0 13Z"/></g></svg><div class="tx " style="left:119.50px;top:475.79px;font-size:14.42px;letter-spacing:0.698px;color:#595959;">Monitored</div><svg class="ic" style="left:240px;top:472px" width="20" height="20" viewBox="0 0 20 20"><g><path transform="rotate(0 10 10)" d="M18.68 7.7L14.7 10L18.68 12.3" fill="none" stroke="#3db5ea" stroke-width="2.6" stroke-linecap="round" stroke-linejoin="round"/><path transform="rotate(60 10 10)" d="M18.68 7.7L14.7 10L18.68 12.3" fill="none" stroke="#3db5ea" stroke-width="2.6" stroke-linecap="round" stroke-linejoin="round"/><path transform="rotate(120 10 10)" d="M18.68 7.7L14.7 10L18.68 12.3" fill="none" stroke="#3db5ea" stroke-width="2.6" stroke-linecap="round" stroke-linejoin="round"/><path transform="rotate(180 10 10)" d="M18.68 7.7L14.7 10L18.68 12.3" fill="none" stroke="#3db5ea" stroke-width="2.6" stroke-linecap="round" stroke-linejoin="round"/><path transform="rotate(240 10 10)" d="M18.68 7.7L14.7 10L18.68 12.3" fill="none" stroke="#3db5ea" stroke-width="2.6" stroke-linecap="round" stroke-linejoin="round"/><path transform="rotate(300 10 10)" d="M18.68 7.7L14.7 10L18.68 12.3" fill="none" stroke="#3db5ea" stroke-width="2.6" stroke-linecap="round" stroke-linejoin="round"/></g><path d="M10 8L12 10L10 12L8 10Z" fill="#3db5ea"/></svg><div class="tx " style="left:270.50px;top:474.79px;font-size:14.42px;letter-spacing:0.831px;color:#a545c6;">evgeny test</div><div class="bx" style="left:585.2px;top:475.3px;width:13.6px;height:13.6px;border-radius:50%;background:#4ab4f3"></div><div class="bx" style="left:609.2px;top:475.3px;width:13.6px;height:13.6px;border-radius:50%;background:#80e5c8"></div><div class="bx" style="left:633.2px;top:475.3px;width:13.6px;height:13.6px;border-radius:50%;background:#e6e6e6"></div><div class="bx" style="left:657.2px;top:475.3px;width:13.6px;height:13.6px;border-radius:50%;background:#e6e6e6"></div><div class="bx" style="left:681.2px;top:475.3px;width:13.6px;height:13.6px;border-radius:50%;background:#3ccf80"></div><div class="bx" style="left:705.2px;top:475.3px;width:13.6px;height:13.6px;border-radius:50%;background:#3d9ef2"></div><svg class="ic" style="left:817px;top:473px" width="16" height="16" viewBox="0 0 16 16"><path d="M8 0.3L15.7 8L8 15.7L0.3 8Z" fill="#c00000"/><rect x="7.25" y="4.3" width="1.5" height="4.9" rx="0.5" fill="#fff"/><rect x="7.25" y="10.2" width="1.5" height="1.4" rx="0.4" fill="#fff"/></svg><div class="tx " style="left:845.20px;top:473.79px;font-size:14.42px;letter-spacing:0.888px;color:#595959;">82</div><div class="bx" style="left:80px;top:534px;width:897px;height:2px;background:#f8f8f8"></div><svg class="ic" style="left:90.0px;top:505.5px" width="24" height="24" viewBox="0 0 24 24"><path d="M1.71 7.84A11.1 11.1 0 1 1 16.51 22.14" fill="none" stroke="#e8890c" stroke-width="1.5"/><g transform="translate(5.5,6.0) scale(0.9285714285714286,0.8125)" fill="#3a3a3a"><ellipse cx="7" cy="3" rx="7" ry="3"/><path d="M0 4.6C0 6.26 3.13 7.6 7 7.6S14 6.26 14 4.6V8C14 9.66 10.87 11 7 11S0 9.66 0 8Z"/><path d="M0 9.6C0 11.26 3.13 12.6 7 12.6S14 11.26 14 9.6V13C14 14.66 10.87 16 7 16S0 14.66 0 13Z"/></g></svg><div class="tx " style="left:119.50px;top:511.79px;font-size:14.42px;letter-spacing:0.698px;color:#595959;">Monitored</div><svg class="ic" style="left:240px;top:508px" width="20" height="20" viewBox="0 0 20 20"><g><path transform="rotate(0 10 10)" d="M18.68 7.7L14.7 10L18.68 12.3" fill="none" stroke="#3db5ea" stroke-width="2.6" stroke-linecap="round" stroke-linejoin="round"/><path transform="rotate(60 10 10)" d="M18.68 7.7L14.7 10L18.68 12.3" fill="none" stroke="#3db5ea" stroke-width="2.6" stroke-linecap="round" stroke-linejoin="round"/><path transform="rotate(120 10 10)" d="M18.68 7.7L14.7 10L18.68 12.3" fill="none" stroke="#3db5ea" stroke-width="2.6" stroke-linecap="round" stroke-linejoin="round"/><path transform="rotate(180 10 10)" d="M18.68 7.7L14.7 10L18.68 12.3" fill="none" stroke="#3db5ea" stroke-width="2.6" stroke-linecap="round" stroke-linejoin="round"/><path transform="rotate(240 10 10)" d="M18.68 7.7L14.7 10L18.68 12.3" fill="none" stroke="#3db5ea" stroke-width="2.6" stroke-linecap="round" stroke-linejoin="round"/><path transform="rotate(300 10 10)" d="M18.68 7.7L14.7 10L18.68 12.3" fill="none" stroke="#3db5ea" stroke-width="2.6" stroke-linecap="round" stroke-linejoin="round"/></g><path d="M10 8L12 10L10 12L8 10Z" fill="#3db5ea"/></svg><div class="tx " style="left:270.50px;top:510.79px;font-size:14.42px;letter-spacing:0.806px;color:#a545c6;">evgeny test 2</div><div class="bx" style="left:585.2px;top:511.3px;width:13.6px;height:13.6px;border-radius:50%;background:#4ab4f3"></div><div class="bx" style="left:609.2px;top:511.3px;width:13.6px;height:13.6px;border-radius:50%;background:#80e5c8"></div><div class="bx" style="left:633.2px;top:511.3px;width:13.6px;height:13.6px;border-radius:50%;background:#e6e6e6"></div><div class="bx" style="left:657.2px;top:511.3px;width:13.6px;height:13.6px;border-radius:50%;background:#e6e6e6"></div><div class="bx" style="left:681.2px;top:511.3px;width:13.6px;height:13.6px;border-radius:50%;background:#3ccf80"></div><div class="bx" style="left:705.2px;top:511.3px;width:13.6px;height:13.6px;border-radius:50%;background:#3d9ef2"></div><svg class="ic" style="left:817px;top:509px" width="16" height="16" viewBox="0 0 16 16"><path d="M8 0.3L15.7 8L8 15.7L0.3 8Z" fill="#c00000"/><rect x="7.25" y="4.3" width="1.5" height="4.9" rx="0.5" fill="#fff"/><rect x="7.25" y="10.2" width="1.5" height="1.4" rx="0.4" fill="#fff"/></svg><div class="tx " style="left:845.20px;top:509.79px;font-size:14.42px;letter-spacing:0.888px;color:#595959;">82</div><div class="bx" style="left:80px;top:570px;width:897px;height:2px;background:#f8f8f8"></div><svg class="ic" style="left:90.0px;top:541.5px" width="24" height="24" viewBox="0 0 24 24"><path d="M1.71 7.84A11.1 11.1 0 1 1 16.51 22.14" fill="none" stroke="#e8890c" stroke-width="1.5"/><g transform="translate(5.5,6.0) scale(0.9285714285714286,0.8125)" fill="#3a3a3a"><ellipse cx="7" cy="3" rx="7" ry="3"/><path d="M0 4.6C0 6.26 3.13 7.6 7 7.6S14 6.26 14 4.6V8C14 9.66 10.87 11 7 11S0 9.66 0 8Z"/><path d="M0 9.6C0 11.26 3.13 12.6 7 12.6S14 11.26 14 9.6V13C14 14.66 10.87 16 7 16S0 14.66 0 13Z"/></g></svg><div class="tx " style="left:119.50px;top:547.79px;font-size:14.42px;letter-spacing:0.698px;color:#595959;">Monitored</div><svg class="ic" style="left:240px;top:544px" width="20" height="20" viewBox="0 0 20 20"><g><path transform="rotate(0 10 10)" d="M18.68 7.7L14.7 10L18.68 12.3" fill="none" stroke="#3db5ea" stroke-width="2.6" stroke-linecap="round" stroke-linejoin="round"/><path transform="rotate(60 10 10)" d="M18.68 7.7L14.7 10L18.68 12.3" fill="none" stroke="#3db5ea" stroke-width="2.6" stroke-linecap="round" stroke-linejoin="round"/><path transform="rotate(120 10 10)" d="M18.68 7.7L14.7 10L18.68 12.3" fill="none" stroke="#3db5ea" stroke-width="2.6" stroke-linecap="round" stroke-linejoin="round"/><path transform="rotate(180 10 10)" d="M18.68 7.7L14.7 10L18.68 12.3" fill="none" stroke="#3db5ea" stroke-width="2.6" stroke-linecap="round" stroke-linejoin="round"/><path transform="rotate(240 10 10)" d="M18.68 7.7L14.7 10L18.68 12.3" fill="none" stroke="#3db5ea" stroke-width="2.6" stroke-linecap="round" stroke-linejoin="round"/><path transform="rotate(300 10 10)" d="M18.68 7.7L14.7 10L18.68 12.3" fill="none" stroke="#3db5ea" stroke-width="2.6" stroke-linecap="round" stroke-linejoin="round"/></g><path d="M10 8L12 10L10 12L8 10Z" fill="#3db5ea"/></svg><div class="tx " style="left:270.50px;top:546.79px;font-size:14.42px;letter-spacing:0.742px;color:#a545c6;">lalon test</div><div class="bx" style="left:585.2px;top:547.3px;width:13.6px;height:13.6px;border-radius:50%;background:#4ab4f3"></div><div class="bx" style="left:609.2px;top:547.3px;width:13.6px;height:13.6px;border-radius:50%;background:#80e5c8"></div><div class="bx" style="left:633.2px;top:547.3px;width:13.6px;height:13.6px;border-radius:50%;background:#e6e6e6"></div><div class="bx" style="left:657.2px;top:547.3px;width:13.6px;height:13.6px;border-radius:50%;background:#e6e6e6"></div><div class="bx" style="left:681.2px;top:547.3px;width:13.6px;height:13.6px;border-radius:50%;background:#3ccf80"></div><div class="bx" style="left:705.2px;top:547.3px;width:13.6px;height:13.6px;border-radius:50%;background:#3d9ef2"></div><svg class="ic" style="left:817px;top:545px" width="16" height="16" viewBox="0 0 16 16"><path d="M8 0.3L15.7 8L8 15.7L0.3 8Z" fill="#c00000"/><rect x="7.25" y="4.3" width="1.5" height="4.9" rx="0.5" fill="#fff"/><rect x="7.25" y="10.2" width="1.5" height="1.4" rx="0.4" fill="#fff"/></svg><div class="tx " style="left:845.20px;top:545.79px;font-size:14.42px;letter-spacing:0.888px;color:#595959;">72</div><div class="bx" style="left:80px;top:606px;width:897px;height:2px;background:#f8f8f8"></div><svg class="ic" style="left:90.0px;top:577.5px" width="24" height="24" viewBox="0 0 24 24"><path d="M1.71 7.84A11.1 11.1 0 1 1 16.51 22.14" fill="none" stroke="#e8890c" stroke-width="1.5"/><g transform="translate(5.5,6.0) scale(0.9285714285714286,0.8125)" fill="#3a3a3a"><ellipse cx="7" cy="3" rx="7" ry="3"/><path d="M0 4.6C0 6.26 3.13 7.6 7 7.6S14 6.26 14 4.6V8C14 9.66 10.87 11 7 11S0 9.66 0 8Z"/><path d="M0 9.6C0 11.26 3.13 12.6 7 12.6S14 11.26 14 9.6V13C14 14.66 10.87 16 7 16S0 14.66 0 13Z"/></g></svg><div class="tx " style="left:119.50px;top:583.79px;font-size:14.42px;letter-spacing:0.698px;color:#595959;">Monitored</div><svg class="ic" style="left:240px;top:580px" width="20" height="20" viewBox="0 0 20 20"><g><path transform="rotate(0 10 10)" d="M18.68 7.7L14.7 10L18.68 12.3" fill="none" stroke="#3db5ea" stroke-width="2.6" stroke-linecap="round" stroke-linejoin="round"/><path transform="rotate(60 10 10)" d="M18.68 7.7L14.7 10L18.68 12.3" fill="none" stroke="#3db5ea" stroke-width="2.6" stroke-linecap="round" stroke-linejoin="round"/><path transform="rotate(120 10 10)" d="M18.68 7.7L14.7 10L18.68 12.3" fill="none" stroke="#3db5ea" stroke-width="2.6" stroke-linecap="round" stroke-linejoin="round"/><path transform="rotate(180 10 10)" d="M18.68 7.7L14.7 10L18.68 12.3" fill="none" stroke="#3db5ea" stroke-width="2.6" stroke-linecap="round" stroke-linejoin="round"/><path transform="rotate(240 10 10)" d="M18.68 7.7L14.7 10L18.68 12.3" fill="none" stroke="#3db5ea" stroke-width="2.6" stroke-linecap="round" stroke-linejoin="round"/><path transform="rotate(300 10 10)" d="M18.68 7.7L14.7 10L18.68 12.3" fill="none" stroke="#3db5ea" stroke-width="2.6" stroke-linecap="round" stroke-linejoin="round"/></g><path d="M10 8L12 10L10 12L8 10Z" fill="#3db5ea"/></svg><div class="tx " style="left:270.50px;top:582.79px;font-size:14.42px;letter-spacing:0.804px;color:#a545c6;">evg-test</div><div class="bx" style="left:585.2px;top:583.3px;width:13.6px;height:13.6px;border-radius:50%;background:#4ab4f3"></div><div class="bx" style="left:609.2px;top:583.3px;width:13.6px;height:13.6px;border-radius:50%;background:#80e5c8"></div><div class="bx" style="left:633.2px;top:583.3px;width:13.6px;height:13.6px;border-radius:50%;background:#e6e6e6"></div><div class="bx" style="left:657.2px;top:583.3px;width:13.6px;height:13.6px;border-radius:50%;background:#e6e6e6"></div><div class="bx" style="left:681.2px;top:583.3px;width:13.6px;height:13.6px;border-radius:50%;background:#3ccf80"></div><div class="bx" style="left:705.2px;top:583.3px;width:13.6px;height:13.6px;border-radius:50%;background:#3d9ef2"></div><svg class="ic" style="left:817px;top:581px" width="16" height="16" viewBox="0 0 16 16"><path d="M8 0.3L15.7 8L8 15.7L0.3 8Z" fill="#c00000"/><rect x="7.25" y="4.3" width="1.5" height="4.9" rx="0.5" fill="#fff"/><rect x="7.25" y="10.2" width="1.5" height="1.4" rx="0.4" fill="#fff"/></svg><div class="tx " style="left:845.20px;top:581.79px;font-size:14.42px;letter-spacing:0.888px;color:#595959;">72</div><div class="bx" style="left:80px;top:642px;width:897px;height:2px;background:#f8f8f8"></div><svg class="ic" style="left:90.0px;top:613.5px" width="24" height="24" viewBox="0 0 24 24"><path d="M1.71 7.84A11.1 11.1 0 1 1 16.51 22.14" fill="none" stroke="#e8890c" stroke-width="1.5"/><g transform="translate(5.5,6.0) scale(0.9285714285714286,0.8125)" fill="#3a3a3a"><ellipse cx="7" cy="3" rx="7" ry="3"/><path d="M0 4.6C0 6.26 3.13 7.6 7 7.6S14 6.26 14 4.6V8C14 9.66 10.87 11 7 11S0 9.66 0 8Z"/><path d="M0 9.6C0 11.26 3.13 12.6 7 12.6S14 11.26 14 9.6V13C14 14.66 10.87 16 7 16S0 14.66 0 13Z"/></g></svg><div class="tx " style="left:119.50px;top:619.79px;font-size:14.42px;letter-spacing:0.698px;color:#595959;">Monitored</div><svg class="ic" style="left:241px;top:616px" width="18" height="20" viewBox="0 0 18 20"><path d="M0.2 4Q0.2 3 1.5 3H4V17H1.5Q0.2 17 0.2 16Z" fill="#5b93d3"/><path d="M0.2 4Q0.2 3 1.5 3H1.7V17H1.5Q0.2 17 0.2 16Z" fill="#2a5ea8"/><path d="M14 3H16.5Q17.9 3 17.9 4V16Q17.9 17 16.5 17H14Z" fill="#4a82c8"/><rect x="14" y="3" width="1.8" height="14" fill="#2b5aa0"/><path d="M4 3.5Q4 0 7.5 0H10.5Q14 0 14 3.5V16.5Q14 20 10.5 20H7.5Q4 20 4 16.5Z" fill="#3c72c0"/><path d="M4 3.5Q4 0 7.5 0H7V20H7.5Q4 20 4 16.5Z" fill="#2b5aa0"/><path d="M11 0H10.5Q14 0 14 3.5V16.5Q14 20 10.5 20H11Z" fill="#5b93d3"/></svg><div class="tx " style="left:270.50px;top:618.79px;font-size:14.42px;letter-spacing:0.702px;color:#a545c6;">evg-rs-test</div><div class="bx" style="left:585.2px;top:619.3px;width:13.6px;height:13.6px;border-radius:50%;background:#4ab4f3"></div><div class="bx" style="left:609.2px;top:619.3px;width:13.6px;height:13.6px;border-radius:50%;background:#80e5c8"></div><div class="bx" style="left:633.2px;top:619.3px;width:13.6px;height:13.6px;border-radius:50%;background:#e6e6e6"></div><div class="bx" style="left:657.2px;top:619.3px;width:13.6px;height:13.6px;border-radius:50%;background:#e6e6e6"></div><div class="bx" style="left:681.2px;top:619.3px;width:13.6px;height:13.6px;border-radius:50%;background:#3ccf80"></div><div class="bx" style="left:705.2px;top:619.3px;width:13.6px;height:13.6px;border-radius:50%;background:#3d9ef2"></div><svg class="ic" style="left:817px;top:617px" width="16" height="16" viewBox="0 0 16 16"><path d="M8 0.3L15.7 8L8 15.7L0.3 8Z" fill="#c00000"/><rect x="7.25" y="4.3" width="1.5" height="4.9" rx="0.5" fill="#fff"/><rect x="7.25" y="10.2" width="1.5" height="1.4" rx="0.4" fill="#fff"/></svg><div class="tx " style="left:845.20px;top:617.79px;font-size:14.42px;letter-spacing:0.888px;color:#595959;">72</div><div class="bx" style="left:80px;top:678px;width:897px;height:2px;background:#f8f8f8"></div><svg class="ic" style="left:90.0px;top:649.5px" width="24" height="24" viewBox="0 0 24 24"><path d="M1.71 7.84A11.1 11.1 0 1 1 16.51 22.14" fill="none" stroke="#e8890c" stroke-width="1.5"/><g transform="translate(5.5,6.0) scale(0.9285714285714286,0.8125)" fill="#3a3a3a"><ellipse cx="7" cy="3" rx="7" ry="3"/><path d="M0 4.6C0 6.26 3.13 7.6 7 7.6S14 6.26 14 4.6V8C14 9.66 10.87 11 7 11S0 9.66 0 8Z"/><path d="M0 9.6C0 11.26 3.13 12.6 7 12.6S14 11.26 14 9.6V13C14 14.66 10.87 16 7 16S0 14.66 0 13Z"/></g></svg><div class="tx " style="left:119.50px;top:655.79px;font-size:14.42px;letter-spacing:0.698px;color:#595959;">Monitored</div><svg class="ic" style="left:241px;top:652px" width="18" height="20" viewBox="0 0 18 20"><path d="M0.2 4Q0.2 3 1.5 3H4V17H1.5Q0.2 17 0.2 16Z" fill="#5b93d3"/><path d="M0.2 4Q0.2 3 1.5 3H1.7V17H1.5Q0.2 17 0.2 16Z" fill="#2a5ea8"/><path d="M14 3H16.5Q17.9 3 17.9 4V16Q17.9 17 16.5 17H14Z" fill="#4a82c8"/><rect x="14" y="3" width="1.8" height="14" fill="#2b5aa0"/><path d="M4 3.5Q4 0 7.5 0H10.5Q14 0 14 3.5V16.5Q14 20 10.5 20H7.5Q4 20 4 16.5Z" fill="#3c72c0"/><path d="M4 3.5Q4 0 7.5 0H7V20H7.5Q4 20 4 16.5Z" fill="#2b5aa0"/><path d="M11 0H10.5Q14 0 14 3.5V16.5Q14 20 10.5 20H11Z" fill="#5b93d3"/></svg><div class="tx " style="left:270.50px;top:654.79px;font-size:14.42px;letter-spacing:0.748px;color:#a545c6;">rs-custom-port</div><div class="bx" style="left:585.2px;top:655.3px;width:13.6px;height:13.6px;border-radius:50%;background:#4ab4f3"></div><div class="bx" style="left:609.2px;top:655.3px;width:13.6px;height:13.6px;border-radius:50%;background:#80e5c8"></div><div class="bx" style="left:633.2px;top:655.3px;width:13.6px;height:13.6px;border-radius:50%;background:#e6e6e6"></div><div class="bx" style="left:657.2px;top:655.3px;width:13.6px;height:13.6px;border-radius:50%;background:#f24fc3"></div><div class="bx" style="left:681.2px;top:655.3px;width:13.6px;height:13.6px;border-radius:50%;background:#3ccf80"></div><div class="bx" style="left:705.2px;top:655.3px;width:13.6px;height:13.6px;border-radius:50%;background:#3d9ef2"></div><svg class="ic" style="left:817px;top:653px" width="16" height="16" viewBox="0 0 16 16"><path d="M8 0.3L15.7 8L8 15.7L0.3 8Z" fill="#c00000"/><rect x="7.25" y="4.3" width="1.5" height="4.9" rx="0.5" fill="#fff"/><rect x="7.25" y="10.2" width="1.5" height="1.4" rx="0.4" fill="#fff"/></svg><div class="tx " style="left:845.20px;top:653.79px;font-size:14.42px;letter-spacing:0.888px;color:#595959;">65</div><div class="bx" style="left:80px;top:714px;width:897px;height:2px;background:#f8f8f8"></div><svg class="ic" style="left:90.0px;top:685.5px" width="24" height="24" viewBox="0 0 24 24"><circle cx="12.0" cy="12.0" r="11.1" fill="none" stroke="#2a9d5c" stroke-width="1.6"/><g transform="translate(5.5,6.0) scale(0.9285714285714286,0.8125)" fill="#3a3a3a"><ellipse cx="7" cy="3" rx="7" ry="3"/><path d="M0 4.6C0 6.26 3.13 7.6 7 7.6S14 6.26 14 4.6V8C14 9.66 10.87 11 7 11S0 9.66 0 8Z"/><path d="M0 9.6C0 11.26 3.13 12.6 7 12.6S14 11.26 14 9.6V13C14 14.66 10.87 16 7 16S0 14.66 0 13Z"/></g></svg><div class="tx " style="left:119.50px;top:691.79px;font-size:14.42px;letter-spacing:0.473px;color:#595959;">Secured</div><svg class="ic" style="left:240px;top:688px" width="20" height="20" viewBox="0 0 20 20"><g><path transform="rotate(0 10 10)" d="M18.68 7.7L14.7 10L18.68 12.3" fill="none" stroke="#3db5ea" stroke-width="2.6" stroke-linecap="round" stroke-linejoin="round"/><path transform="rotate(60 10 10)" d="M18.68 7.7L14.7 10L18.68 12.3" fill="none" stroke="#3db5ea" stroke-width="2.6" stroke-linecap="round" stroke-linejoin="round"/><path transform="rotate(120 10 10)" d="M18.68 7.7L14.7 10L18.68 12.3" fill="none" stroke="#3db5ea" stroke-width="2.6" stroke-linecap="round" stroke-linejoin="round"/><path transform="rotate(180 10 10)" d="M18.68 7.7L14.7 10L18.68 12.3" fill="none" stroke="#3db5ea" stroke-width="2.6" stroke-linecap="round" stroke-linejoin="round"/><path transform="rotate(240 10 10)" d="M18.68 7.7L14.7 10L18.68 12.3" fill="none" stroke="#3db5ea" stroke-width="2.6" stroke-linecap="round" stroke-linejoin="round"/><path transform="rotate(300 10 10)" d="M18.68 7.7L14.7 10L18.68 12.3" fill="none" stroke="#3db5ea" stroke-width="2.6" stroke-linecap="round" stroke-linejoin="round"/></g><path d="M10 8L12 10L10 12L8 10Z" fill="#3db5ea"/></svg><div class="tx " style="left:270.50px;top:690.79px;font-size:14.42px;letter-spacing:0.408px;color:#a545c6;">Ben Test</div><div class="bx" style="left:585.2px;top:691.3px;width:13.6px;height:13.6px;border-radius:50%;background:#4ab4f3"></div><div class="bx" style="left:609.2px;top:691.3px;width:13.6px;height:13.6px;border-radius:50%;background:#80e5c8"></div><div class="bx" style="left:633.2px;top:691.3px;width:13.6px;height:13.6px;border-radius:50%;background:#e6e6e6"></div><div class="bx" style="left:657.2px;top:691.3px;width:13.6px;height:13.6px;border-radius:50%;background:#e6e6e6"></div><div class="bx" style="left:681.2px;top:691.3px;width:13.6px;height:13.6px;border-radius:50%;background:#3ccf80"></div><div class="bx" style="left:705.2px;top:691.3px;width:13.6px;height:13.6px;border-radius:50%;background:#3d9ef2"></div><svg class="ic" style="left:816px;top:689px" width="18" height="16" viewBox="0 0 18 16"><path d="M9.4 0.9L17.6 14.8H1.2Z" fill="#e8890c"/><rect x="8.65" y="6.2" width="1.5" height="5.2" rx="0.5" fill="#fff"/><rect x="8.65" y="12.1" width="1.5" height="1.3" rx="0.4" fill="#fff"/></svg><div class="tx " style="left:845.20px;top:689.79px;font-size:14.42px;letter-spacing:0.888px;color:#595959;">57</div><div class="bx" style="left:80px;top:750px;width:897px;height:2px;background:#f8f8f8"></div><svg class="ic" style="left:90.0px;top:721.5px" width="24" height="24" viewBox="0 0 24 24"><circle cx="12.0" cy="12.0" r="11.1" fill="none" stroke="#2a9d5c" stroke-width="1.6"/><g transform="translate(5.5,6.0) scale(0.9285714285714286,0.8125)" fill="#3a3a3a"><ellipse cx="7" cy="3" rx="7" ry="3"/><path d="M0 4.6C0 6.26 3.13 7.6 7 7.6S14 6.26 14 4.6V8C14 9.66 10.87 11 7 11S0 9.66 0 8Z"/><path d="M0 9.6C0 11.26 3.13 12.6 7 12.6S14 11.26 14 9.6V13C14 14.66 10.87 16 7 16S0 14.66 0 13Z"/></g></svg><div class="tx " style="left:119.50px;top:727.79px;font-size:14.42px;letter-spacing:0.473px;color:#595959;">Secured</div><svg class="ic" style="left:240px;top:724px" width="20" height="20" viewBox="0 0 20 20"><g><path transform="rotate(0 10 10)" d="M18.68 7.7L14.7 10L18.68 12.3" fill="none" stroke="#3db5ea" stroke-width="2.6" stroke-linecap="round" stroke-linejoin="round"/><path transform="rotate(60 10 10)" d="M18.68 7.7L14.7 10L18.68 12.3" fill="none" stroke="#3db5ea" stroke-width="2.6" stroke-linecap="round" stroke-linejoin="round"/><path transform="rotate(120 10 10)" d="M18.68 7.7L14.7 10L18.68 12.3" fill="none" stroke="#3db5ea" stroke-width="2.6" stroke-linecap="round" stroke-linejoin="round"/><path transform="rotate(180 10 10)" d="M18.68 7.7L14.7 10L18.68 12.3" fill="none" stroke="#3db5ea" stroke-width="2.6" stroke-linecap="round" stroke-linejoin="round"/><path transform="rotate(240 10 10)" d="M18.68 7.7L14.7 10L18.68 12.3" fill="none" stroke="#3db5ea" stroke-width="2.6" stroke-linecap="round" stroke-linejoin="round"/><path transform="rotate(300 10 10)" d="M18.68 7.7L14.7 10L18.68 12.3" fill="none" stroke="#3db5ea" stroke-width="2.6" stroke-linecap="round" stroke-linejoin="round"/></g><path d="M10 8L12 10L10 12L8 10Z" fill="#3db5ea"/></svg><div class="tx " style="left:270.50px;top:726.79px;font-size:14.42px;letter-spacing:0.759px;color:#a545c6;">Loren test11</div><div class="bx" style="left:585.2px;top:727.3px;width:13.6px;height:13.6px;border-radius:50%;background:#4ab4f3"></div><div class="bx" style="left:609.2px;top:727.3px;width:13.6px;height:13.6px;border-radius:50%;background:#80e5c8"></div><div class="bx" style="left:633.2px;top:727.3px;width:13.6px;height:13.6px;border-radius:50%;background:#e6e6e6"></div><div class="bx" style="left:657.2px;top:727.3px;width:13.6px;height:13.6px;border-radius:50%;background:#f24fc3"></div><div class="bx" style="left:681.2px;top:727.3px;width:13.6px;height:13.6px;border-radius:50%;background:#3ccf80"></div><div class="bx" style="left:705.2px;top:727.3px;width:13.6px;height:13.6px;border-radius:50%;background:#3d9ef2"></div><svg class="ic" style="left:816px;top:725px" width="18" height="16" viewBox="0 0 18 16"><path d="M9.4 0.9L17.6 14.8H1.2Z" fill="#e8890c"/><rect x="8.65" y="6.2" width="1.5" height="5.2" rx="0.5" fill="#fff"/><rect x="8.65" y="12.1" width="1.5" height="1.3" rx="0.4" fill="#fff"/></svg><div class="tx " style="left:845.20px;top:725.79px;font-size:14.42px;letter-spacing:0.888px;color:#595959;">55</div><div class="bx" style="left:80px;top:786px;width:897px;height:2px;background:#f8f8f8"></div><svg class="ic" style="left:90.0px;top:757.5px" width="24" height="24" viewBox="0 0 24 24"><path d="M1.18 9.50A11.1 11.1 0 0 1 22.67 8.94" fill="none" stroke="#cc0000" stroke-width="1.5"/><g transform="translate(5.5,6.0) scale(0.9285714285714286,0.8125)" fill="#3a3a3a"><ellipse cx="7" cy="3" rx="7" ry="3"/><path d="M0 4.6C0 6.26 3.13 7.6 7 7.6S14 6.26 14 4.6V8C14 9.66 10.87 11 7 11S0 9.66 0 8Z"/><path d="M0 9.6C0 11.26 3.13 12.6 7 12.6S14 11.26 14 9.6V13C14 14.66 10.87 16 7 16S0 14.66 0 13Z"/></g></svg><div class="tx " style="left:119.50px;top:763.79px;font-size:14.42px;letter-spacing:0.594px;color:#595959;">Discovered</div><svg class="ic" style="left:240px;top:760px" width="20" height="20" viewBox="0 0 20 20"><g><path transform="rotate(0 10 10)" d="M18.68 7.7L14.7 10L18.68 12.3" fill="none" stroke="#3db5ea" stroke-width="2.6" stroke-linecap="round" stroke-linejoin="round"/><path transform="rotate(60 10 10)" d="M18.68 7.7L14.7 10L18.68 12.3" fill="none" stroke="#3db5ea" stroke-width="2.6" stroke-linecap="round" stroke-linejoin="round"/><path transform="rotate(120 10 10)" d="M18.68 7.7L14.7 10L18.68 12.3" fill="none" stroke="#3db5ea" stroke-width="2.6" stroke-linecap="round" stroke-linejoin="round"/><path transform="rotate(180 10 10)" d="M18.68 7.7L14.7 10L18.68 12.3" fill="none" stroke="#3db5ea" stroke-width="2.6" stroke-linecap="round" stroke-linejoin="round"/><path transform="rotate(240 10 10)" d="M18.68 7.7L14.7 10L18.68 12.3" fill="none" stroke="#3db5ea" stroke-width="2.6" stroke-linecap="round" stroke-linejoin="round"/><path transform="rotate(300 10 10)" d="M18.68 7.7L14.7 10L18.68 12.3" fill="none" stroke="#3db5ea" stroke-width="2.6" stroke-linecap="round" stroke-linejoin="round"/></g><path d="M10 8L12 10L10 12L8 10Z" fill="#3db5ea"/></svg><div class="tx " style="left:270.50px;top:762.79px;font-size:14.42px;letter-spacing:0.728px;color:#a545c6;">alex security policy test</div><div class="bx" style="left:585.2px;top:763.3px;width:13.6px;height:13.6px;border-radius:50%;background:#4ab4f3"></div><div class="bx" style="left:609.2px;top:763.3px;width:13.6px;height:13.6px;border-radius:50%;background:#80e5c8"></div><div class="bx" style="left:633.2px;top:763.3px;width:13.6px;height:13.6px;border-radius:50%;background:#e6e6e6"></div><div class="bx" style="left:657.2px;top:763.3px;width:13.6px;height:13.6px;border-radius:50%;background:#e6e6e6"></div><div class="bx" style="left:681.2px;top:763.3px;width:13.6px;height:13.6px;border-radius:50%;background:#3ccf80"></div><div class="bx" style="left:705.2px;top:763.3px;width:13.6px;height:13.6px;border-radius:50%;background:#e6e6e6"></div><svg class="ic" style="left:816px;top:761px" width="18" height="16" viewBox="0 0 18 16"><path d="M9.4 0.9L17.6 14.8H1.2Z" fill="#e8890c"/><rect x="8.65" y="6.2" width="1.5" height="5.2" rx="0.5" fill="#fff"/><rect x="8.65" y="12.1" width="1.5" height="1.3" rx="0.4" fill="#fff"/></svg><div class="tx " style="left:845.20px;top:761.79px;font-size:14.42px;letter-spacing:0.888px;color:#595959;">52</div><div class="bx" style="left:80px;top:822px;width:897px;height:2px;background:#f8f8f8"></div><svg class="ic" style="left:90.0px;top:793.5px" width="24" height="24" viewBox="0 0 24 24"><circle cx="12.0" cy="12.0" r="11.1" fill="none" stroke="#2a9d5c" stroke-width="1.6"/><g transform="translate(5.5,6.0) scale(0.9285714285714286,0.8125)" fill="#3a3a3a"><ellipse cx="7" cy="3" rx="7" ry="3"/><path d="M0 4.6C0 6.26 3.13 7.6 7 7.6S14 6.26 14 4.6V8C14 9.66 10.87 11 7 11S0 9.66 0 8Z"/><path d="M0 9.6C0 11.26 3.13 12.6 7 12.6S14 11.26 14 9.6V13C14 14.66 10.87 16 7 16S0 14.66 0 13Z"/></g></svg><div class="tx " style="left:119.50px;top:799.79px;font-size:14.42px;letter-spacing:0.473px;color:#595959;">Secured</div><svg class="ic" style="left:240px;top:796px" width="20" height="20" viewBox="0 0 20 20"><g><path transform="rotate(0 10 10)" d="M18.68 7.7L14.7 10L18.68 12.3" fill="none" stroke="#3db5ea" stroke-width="2.6" stroke-linecap="round" stroke-linejoin="round"/><path transform="rotate(60 10 10)" d="M18.68 7.7L14.7 10L18.68 12.3" fill="none" stroke="#3db5ea" stroke-width="2.6" stroke-linecap="round" stroke-linejoin="round"/><path transform="rotate(120 10 10)" d="M18.68 7.7L14.7 10L18.68 12.3" fill="none" stroke="#3db5ea" stroke-width="2.6" stroke-linecap="round" stroke-linejoin="round"/><path transform="rotate(180 10 10)" d="M18.68 7.7L14.7 10L18.68 12.3" fill="none" stroke="#3db5ea" stroke-width="2.6" stroke-linecap="round" stroke-linejoin="round"/><path transform="rotate(240 10 10)" d="M18.68 7.7L14.7 10L18.68 12.3" fill="none" stroke="#3db5ea" stroke-width="2.6" stroke-linecap="round" stroke-linejoin="round"/><path transform="rotate(300 10 10)" d="M18.68 7.7L14.7 10L18.68 12.3" fill="none" stroke="#3db5ea" stroke-width="2.6" stroke-linecap="round" stroke-linejoin="round"/></g><path d="M10 8L12 10L10 12L8 10Z" fill="#3db5ea"/></svg><div class="tx " style="left:270.50px;top:798.79px;font-size:14.42px;letter-spacing:0.454px;color:#a545c6;">Ben Lineage Tests</div><div class="bx" style="left:585.2px;top:799.3px;width:13.6px;height:13.6px;border-radius:50%;background:#4ab4f3"></div><div class="bx" style="left:609.2px;top:799.3px;width:13.6px;height:13.6px;border-radius:50%;background:#80e5c8"></div><div class="bx" style="left:633.2px;top:799.3px;width:13.6px;height:13.6px;border-radius:50%;background:#e6e6e6"></div><div class="bx" style="left:657.2px;top:799.3px;width:13.6px;height:13.6px;border-radius:50%;background:#e6e6e6"></div><div class="bx" style="left:681.2px;top:799.3px;width:13.6px;height:13.6px;border-radius:50%;background:#3ccf80"></div><div class="bx" style="left:705.2px;top:799.3px;width:13.6px;height:13.6px;border-radius:50%;background:#3d9ef2"></div><svg class="ic" style="left:816px;top:797px" width="18" height="16" viewBox="0 0 18 16"><path d="M9.4 0.9L17.6 14.8H1.2Z" fill="#e8890c"/><rect x="8.65" y="6.2" width="1.5" height="5.2" rx="0.5" fill="#fff"/><rect x="8.65" y="12.1" width="1.5" height="1.3" rx="0.4" fill="#fff"/></svg><div class="tx " style="left:845.20px;top:797.79px;font-size:14.42px;letter-spacing:0.888px;color:#595959;">52</div><div class="bx" style="left:80px;top:858px;width:897px;height:2px;background:#f8f8f8"></div><svg class="ic" style="left:90.0px;top:829.5px" width="24" height="24" viewBox="0 0 24 24"><path d="M1.71 7.84A11.1 11.1 0 1 1 16.51 22.14" fill="none" stroke="#e8890c" stroke-width="1.5"/><g transform="translate(5.5,6.0) scale(0.9285714285714286,0.8125)" fill="#3a3a3a"><ellipse cx="7" cy="3" rx="7" ry="3"/><path d="M0 4.6C0 6.26 3.13 7.6 7 7.6S14 6.26 14 4.6V8C14 9.66 10.87 11 7 11S0 9.66 0 8Z"/><path d="M0 9.6C0 11.26 3.13 12.6 7 12.6S14 11.26 14 9.6V13C14 14.66 10.87 16 7 16S0 14.66 0 13Z"/></g></svg><div class="tx " style="left:119.50px;top:835.79px;font-size:14.42px;letter-spacing:0.698px;color:#595959;">Monitored</div><svg class="ic" style="left:240px;top:832px" width="20" height="20" viewBox="0 0 20 20"><rect x="0.1" y="7" width="1.9" height="4" rx="0.8" fill="#e07b2a"/><rect x="0.1" y="7.6" width="0.7" height="3.4000000000000004" fill="#b95a18"/><rect x="2.1" y="4" width="2.8" height="7" rx="0.8" fill="#e07b2a"/><rect x="2.1" y="4.6" width="0.7" height="6.4" fill="#b95a18"/><rect x="5.1" y="5.2" width="2.7" height="5.8" rx="0.8" fill="#e07b2a"/><rect x="5.1" y="5.8" width="0.7" height="5.2" fill="#b95a18"/><rect x="8" y="0.4" width="3" height="10.6" rx="0.8" fill="#e07b2a"/><rect x="8" y="1.0" width="0.7" height="10.0" fill="#b95a18"/><rect x="11.2" y="3.2" width="2.8" height="7.8" rx="0.8" fill="#e07b2a"/><rect x="11.2" y="3.8000000000000003" width="0.7" height="7.2" fill="#b95a18"/><rect x="14.1" y="0.7" width="2.9" height="10.3" rx="0.8" fill="#e07b2a"/><rect x="14.1" y="1.2999999999999998" width="0.7" height="9.700000000000001" fill="#b95a18"/><rect x="17" y="0.1" width="1.8" height="10.9" rx="0.8" fill="#e07b2a"/><rect x="17" y="0.7" width="0.7" height="10.3" fill="#b95a18"/><path d="M0 11.2L9 12.6L18.8 11V14.2L9 18.6L0 14.6Z" fill="#e07a28"/><path d="M0 11.2L9 12.6V18.6L0 14.6Z" fill="#bf5f1a"/><path d="M0 11.2L9 12.6L18.8 11L18.8 11.9L9 13.5L0 12.1Z" fill="#f4b07c"/></svg><div class="tx " style="left:270.50px;top:834.79px;font-size:14.42px;letter-spacing:0.795px;color:#a545c6;">test new athena</div><div class="bx" style="left:585.2px;top:835.3px;width:13.6px;height:13.6px;border-radius:50%;background:#4ab4f3"></div><div class="bx" style="left:609.2px;top:835.3px;width:13.6px;height:13.6px;border-radius:50%;background:#80e5c8"></div><div class="bx" style="left:633.2px;top:835.3px;width:13.6px;height:13.6px;border-radius:50%;background:#e6e6e6"></div><div class="bx" style="left:657.2px;top:835.3px;width:13.6px;height:13.6px;border-radius:50%;background:#e6e6e6"></div><div class="bx" style="left:681.2px;top:835.3px;width:13.6px;height:13.6px;border-radius:50%;background:#3ccf80"></div><div class="bx" style="left:705.2px;top:835.3px;width:13.6px;height:13.6px;border-radius:50%;background:#37b9cf"></div><svg class="ic" style="left:816px;top:833px" width="18" height="16" viewBox="0 0 18 16"><path d="M9.4 0.9L17.6 14.8H1.2Z" fill="#e8890c"/><rect x="8.65" y="6.2" width="1.5" height="5.2" rx="0.5" fill="#fff"/><rect x="8.65" y="12.1" width="1.5" height="1.3" rx="0.4" fill="#fff"/></svg><div class="tx " style="left:845.20px;top:833.79px;font-size:14.42px;letter-spacing:0.888px;color:#595959;">52</div><div class="bx" style="left:80px;top:894px;width:897px;height:2px;background:#f8f8f8"></div><svg class="ic" style="left:90.0px;top:865.5px" width="24" height="24" viewBox="0 0 24 24"><path d="M1.18 9.50A11.1 11.1 0 0 1 22.67 8.94" fill="none" stroke="#cc0000" stroke-width="1.5"/><g transform="translate(5.5,6.0) scale(0.9285714285714286,0.8125)" fill="#3a3a3a"><ellipse cx="7" cy="3" rx="7" ry="3"/><path d="M0 4.6C0 6.26 3.13 7.6 7 7.6S14 6.26 14 4.6V8C14 9.66 10.87 11 7 11S0 9.66 0 8Z"/><path d="M0 9.6C0 11.26 3.13 12.6 7 12.6S14 11.26 14 9.6V13C14 14.66 10.87 16 7 16S0 14.66 0 13Z"/></g></svg><div class="tx " style="left:119.50px;top:871.79px;font-size:14.42px;letter-spacing:0.594px;color:#595959;">Discovered</div><svg class="ic" style="left:240px;top:868px" width="20" height="20" viewBox="0 0 20 20"><g><path transform="rotate(0 10 10)" d="M18.68 7.7L14.7 10L18.68 12.3" fill="none" stroke="#3db5ea" stroke-width="2.6" stroke-linecap="round" stroke-linejoin="round"/><path transform="rotate(60 10 10)" d="M18.68 7.7L14.7 10L18.68 12.3" fill="none" stroke="#3db5ea" stroke-width="2.6" stroke-linecap="round" stroke-linejoin="round"/><path transform="rotate(120 10 10)" d="M18.68 7.7L14.7 10L18.68 12.3" fill="none" stroke="#3db5ea" stroke-width="2.6" stroke-linecap="round" stroke-linejoin="round"/><path transform="rotate(180 10 10)" d="M18.68 7.7L14.7 10L18.68 12.3" fill="none" stroke="#3db5ea" stroke-width="2.6" stroke-linecap="round" stroke-linejoin="round"/><path transform="rotate(240 10 10)" d="M18.68 7.7L14.7 10L18.68 12.3" fill="none" stroke="#3db5ea" stroke-width="2.6" stroke-linecap="round" stroke-linejoin="round"/><path transform="rotate(300 10 10)" d="M18.68 7.7L14.7 10L18.68 12.3" fill="none" stroke="#3db5ea" stroke-width="2.6" stroke-linecap="round" stroke-linejoin="round"/></g><path d="M10 8L12 10L10 12L8 10Z" fill="#3db5ea"/></svg><div class="tx " style="left:270.50px;top:870.79px;font-size:14.42px;letter-spacing:0.713px;color:#a545c6;">alexk</div><div class="bx" style="left:585.2px;top:871.3px;width:13.6px;height:13.6px;border-radius:50%;background:#4ab4f3"></div><div class="bx" style="left:609.2px;top:871.3px;width:13.6px;height:13.6px;border-radius:50%;background:#80e5c8"></div><div class="bx" style="left:633.2px;top:871.3px;width:13.6px;height:13.6px;border-radius:50%;background:#e6e6e6"></div><div class="bx" style="left:657.2px;top:871.3px;width:13.6px;height:13.6px;border-radius:50%;background:#e6e6e6"></div><div class="bx" style="left:681.2px;top:871.3px;width:13.6px;height:13.6px;border-radius:50%;background:#3ccf80"></div><div class="bx" style="left:705.2px;top:871.3px;width:13.6px;height:13.6px;border-radius:50%;background:#e6e6e6"></div><svg class="ic" style="left:816px;top:869px" width="18" height="16" viewBox="0 0 18 16"><path d="M9.4 0.9L17.6 14.8H1.2Z" fill="#e8890c"/><rect x="8.65" y="6.2" width="1.5" height="5.2" rx="0.5" fill="#fff"/><rect x="8.65" y="12.1" width="1.5" height="1.3" rx="0.4" fill="#fff"/></svg><div class="tx " style="left:845.20px;top:869.79px;font-size:14.42px;letter-spacing:0.888px;color:#595959;">52</div><div class="bx" style="left:80px;top:930px;width:897px;height:2px;background:#f8f8f8"></div><svg class="ic" style="left:90.0px;top:901.5px" width="24" height="24" viewBox="0 0 24 24"><circle cx="12.0" cy="12.0" r="11.1" fill="none" stroke="#2a9d5c" stroke-width="1.6"/><g transform="translate(5.5,6.0) scale(0.9285714285714286,0.8125)" fill="#3a3a3a"><ellipse cx="7" cy="3" rx="7" ry="3"/><path d="M0 4.6C0 6.26 3.13 7.6 7 7.6S14 6.26 14 4.6V8C14 9.66 10.87 11 7 11S0 9.66 0 8Z"/><path d="M0 9.6C0 11.26 3.13 12.6 7 12.6S14 11.26 14 9.6V13C14 14.66 10.87 16 7 16S0 14.66 0 13Z"/></g></svg><div class="tx " style="left:119.50px;top:907.79px;font-size:14.42px;letter-spacing:0.473px;color:#595959;">Secured</div><svg class="ic" style="left:241px;top:904px" width="18" height="20" viewBox="0 0 18 20"><path d="M0.2 4Q0.2 3 1.5 3H4V17H1.5Q0.2 17 0.2 16Z" fill="#5b93d3"/><path d="M0.2 4Q0.2 3 1.5 3H1.7V17H1.5Q0.2 17 0.2 16Z" fill="#2a5ea8"/><path d="M14 3H16.5Q17.9 3 17.9 4V16Q17.9 17 16.5 17H14Z" fill="#4a82c8"/><rect x="14" y="3" width="1.8" height="14" fill="#2b5aa0"/><path d="M4 3.5Q4 0 7.5 0H10.5Q14 0 14 3.5V16.5Q14 20 10.5 20H7.5Q4 20 4 16.5Z" fill="#3c72c0"/><path d="M4 3.5Q4 0 7.5 0H7V20H7.5Q4 20 4 16.5Z" fill="#2b5aa0"/><path d="M11 0H10.5Q14 0 14 3.5V16.5Q14 20 10.5 20H11Z" fill="#5b93d3"/></svg><div class="tx " style="left:270.50px;top:906.79px;font-size:14.42px;letter-spacing:0.139px;color:#a545c6;">zz</div><div class="bx" style="left:585.2px;top:907.3px;width:13.6px;height:13.6px;border-radius:50%;background:#4ab4f3"></div><div class="bx" style="left:609.2px;top:907.3px;width:13.6px;height:13.6px;border-radius:50%;background:#80e5c8"></div><div class="bx" style="left:633.2px;top:907.3px;width:13.6px;height:13.6px;border-radius:50%;background:#e6e6e6"></div><div class="bx" style="left:657.2px;top:907.3px;width:13.6px;height:13.6px;border-radius:50%;background:#e6e6e6"></div><div class="bx" style="left:681.2px;top:907.3px;width:13.6px;height:13.6px;border-radius:50%;background:#3ccf80"></div><div class="bx" style="left:705.2px;top:907.3px;width:13.6px;height:13.6px;border-radius:50%;background:#3d9ef2"></div><svg class="ic" style="left:816px;top:905px" width="18" height="16" viewBox="0 0 18 16"><path d="M9.4 0.9L17.6 14.8H1.2Z" fill="#e8890c"/><rect x="8.65" y="6.2" width="1.5" height="5.2" rx="0.5" fill="#fff"/><rect x="8.65" y="12.1" width="1.5" height="1.3" rx="0.4" fill="#fff"/></svg><div class="tx " style="left:845.20px;top:905.79px;font-size:14.42px;letter-spacing:0.888px;color:#595959;">50</div></div>
<div class="bx" style="left:999px;top:351px;width:900px;height:557px;background:#fff;border:1px solid #dedede;border-radius:3px;box-sizing:border-box"></div>
<div class="bx" style="left:1000px;top:352px;width:898px;height:38px;background:#eaeaea;border-radius:3px 3px 0 0"></div>
<div class="bx" style="left:1039px;top:359px;width:2px;height:24px;background:#f3f3f3"></div>
<div class="bx" style="left:1289px;top:359px;width:2px;height:24px;background:#f3f3f3"></div>
<div class="bx" style="left:1747px;top:359px;width:2px;height:24px;background:#f3f3f3"></div>
<div class="tx " style="left:1050.60px;top:364.79px;font-size:14.42px;letter-spacing:0.653px;color:#595959;">Object</div>
<div class="tx " style="left:1300.30px;top:364.79px;font-size:14.42px;letter-spacing:0.735px;color:#595959;">Alert</div>
<div class="tx " style="left:1758.40px;top:364.79px;font-size:14.42px;letter-spacing:0.819px;color:#595959;">Timestamp</div>
<svg class="ic" style="left:1842px;top:362px" width="19" height="19" viewBox="0 0 24 24"><path d="M20 12l-1.41-1.41L13 16.17V4h-2v12.17l-5.58-5.59L4 12l8 8 8-8z" fill="#444"/></svg>
<div class="bx" style="left:1000px;top:426px;width:897px;height:2px;background:#f8f8f8"></div>
<svg class="ic" style="left:1013px;top:402px" width="13" height="16" viewBox="0 0 13 16"><path d="M6.5 0.2L0.3 2.6V7.4C0.3 11.3 2.9 14.9 6.5 15.8C10.1 14.9 12.7 11.3 12.7 7.4V2.6Z" fill="#e8890c"/><rect x="5.8" y="4.3" width="1.4" height="5" rx="0.5" fill="#fff"/><rect x="5.8" y="10.4" width="1.4" height="1.3" rx="0.4" fill="#fff"/></svg>
<svg class="ic" style="left:1051px;top:399px" width="18" height="20" viewBox="0 0 18 20"><path d="M0.2 4Q0.2 3 1.5 3H4V17H1.5Q0.2 17 0.2 16Z" fill="#5b93d3"/><path d="M0.2 4Q0.2 3 1.5 3H1.7V17H1.5Q0.2 17 0.2 16Z" fill="#2a5ea8"/><path d="M14 3H16.5Q17.9 3 17.9 4V16Q17.9 17 16.5 17H14Z" fill="#4a82c8"/><rect x="14" y="3" width="1.8" height="14" fill="#2b5aa0"/><path d="M4 3.5Q4 0 7.5 0H10.5Q14 0 14 3.5V16.5Q14 20 10.5 20H7.5Q4 20 4 16.5Z" fill="#3c72c0"/><path d="M4 3.5Q4 0 7.5 0H7V20H7.5Q4 20 4 16.5Z" fill="#2b5aa0"/><path d="M11 0H10.5Q14 0 14 3.5V16.5Q14 20 10.5 20H11Z" fill="#5b93d3"/></svg>
<div class="tx " style="left:1080.40px;top:401.79px;font-size:14.42px;letter-spacing:0.584px;color:#595959;">Redshift Data Store 269</div>
<div class="tx " style="left:1300.30px;top:402.79px;font-size:14.42px;letter-spacing:0.537px;color:#595959;">Redshift user avihai_direct_1 is stale</div>
<div class="tx " style="left:1758.40px;top:402.79px;font-size:14.42px;letter-spacing:0.616px;color:#595959;">Sep 03, 2025</div>
<div class="bx" style="left:1000px;top:462px;width:897px;height:2px;background:#f8f8f8"></div>
<svg class="ic" style="left:1013px;top:438px" width="13" height="16" viewBox="0 0 13 16"><path d="M6.5 0.2L0.3 2.6V7.4C0.3 11.3 2.9 14.9 6.5 15.8C10.1 14.9 12.7 11.3 12.7 7.4V2.6Z" fill="#e8890c"/><rect x="5.8" y="4.3" width="1.4" height="5" rx="0.5" fill="#fff"/><rect x="5.8" y="10.4" width="1.4" height="1.3" rx="0.4" fill="#fff"/></svg>
<svg class="ic" style="left:1051px;top:435px" width="18" height="20" viewBox="0 0 18 20"><path d="M0.2 4Q0.2 3 1.5 3H4V17H1.5Q0.2 17 0.2 16Z" fill="#5b93d3"/><path d="M0.2 4Q0.2 3 1.5 3H1.7V17H1.5Q0.2 17 0.2 16Z" fill="#2a5ea8"/><path d="M14 3H16.5Q17.9 3 17.9 4V16Q17.9 17 16.5 17H14Z" fill="#4a82c8"/><rect x="14" y="3" width="1.8" height="14" fill="#2b5aa0"/><path d="M4 3.5Q4 0 7.5 0H10.5Q14 0 14 3.5V16.5Q14 20 10.5 20H7.5Q4 20 4 16.5Z" fill="#3c72c0"/><path d="M4 3.5Q4 0 7.5 0H7V20H7.5Q4 20 4 16.5Z" fill="#2b5aa0"/><path d="M11 0H10.5Q14 0 14 3.5V16.5Q14 20 10.5 20H11Z" fill="#5b93d3"/></svg>
<div class="tx " style="left:1080.40px;top:437.79px;font-size:14.42px;letter-spacing:0.584px;color:#595959;">Redshift Data Store 269</div>
<div class="tx " style="left:1300.30px;top:438.79px;font-size:14.42px;letter-spacing:0.503px;color:#595959;">Redshift user avihai_role_3 is stale</div>
<div class="tx " style="left:1758.40px;top:438.79px;font-size:14.42px;letter-spacing:0.616px;color:#595959;">Sep 03, 2025</div>
<div class="bx" style="left:1000px;top:498px;width:897px;height:2px;background:#f8f8f8"></div>
<svg class="ic" style="left:1013px;top:474px" width="13" height="16" viewBox="0 0 13 16"><path d="M6.5 0.2L0.3 2.6V7.4C0.3 11.3 2.9 14.9 6.5 15.8C10.1 14.9 12.7 11.3 12.7 7.4V2.6Z" fill="#e8890c"/><rect x="5.8" y="4.3" width="1.4" height="5" rx="0.5" fill="#fff"/><rect x="5.8" y="10.4" width="1.4" height="1.3" rx="0.4" fill="#fff"/></svg>
<svg class="ic" style="left:1051px;top:471px" width="18" height="20" viewBox="0 0 18 20"><path d="M0.2 4Q0.2 3 1.5 3H4V17H1.5Q0.2 17 0.2 16Z" fill="#5b93d3"/><path d="M0.2 4Q0.2 3 1.5 3H1.7V17H1.5Q0.2 17 0.2 16Z" fill="#2a5ea8"/><path d="M14 3H16.5Q17.9 3 17.9 4V16Q17.9 17 16.5 17H14Z" fill="#4a82c8"/><rect x="14" y="3" width="1.8" height="14" fill="#2b5aa0"/><path d="M4 3.5Q4 0 7.5 0H10.5Q14 0 14 3.5V16.5Q14 20 10.5 20H7.5Q4 20 4 16.5Z" fill="#3c72c0"/><path d="M4 3.5Q4 0 7.5 0H7V20H7.5Q4 20 4 16.5Z" fill="#2b5aa0"/><path d="M11 0H10.5Q14 0 14 3.5V16.5Q14 20 10.5 20H11Z" fill="#5b93d3"/></svg>
<div class="tx " style="left:1080.40px;top:473.79px;font-size:14.42px;letter-spacing:1.224px;color:#595959;font-weight:700;">Redshift Data Store 269</div>
<div class="tx " style="left:1300.30px;top:474.79px;font-size:14.42px;letter-spacing:0.988px;color:#595959;font-weight:700;">Redshift user avihai_1 is stale</div>
<div class="tx " style="left:1758.40px;top:474.79px;font-size:14.42px;letter-spacing:1.377px;color:#595959;font-weight:700;">Sep 03, 2025</div>
<div class="bx" style="left:1000px;top:534px;width:897px;height:2px;background:#f8f8f8"></div>
<svg class="ic" style="left:1013px;top:510px" width="13" height="16" viewBox="0 0 13 16"><path d="M6.5 0.2L0.3 2.6V7.4C0.3 11.3 2.9 14.9 6.5 15.8C10.1 14.9 12.7 11.3 12.7 7.4V2.6Z" fill="#e8890c"/><rect x="5.8" y="4.3" width="1.4" height="5" rx="0.5" fill="#fff"/><rect x="5.8" y="10.4" width="1.4" height="1.3" rx="0.4" fill="#fff"/></svg>
<svg class="ic" style="left:1051px;top:507px" width="18" height="20" viewBox="0 0 18 20"><path d="M0.2 4Q0.2 3 1.5 3H4V17H1.5Q0.2 17 0.2 16Z" fill="#5b93d3"/><path d="M0.2 4Q0.2 3 1.5 3H1.7V17H1.5Q0.2 17 0.2 16Z" fill="#2a5ea8"/><path d="M14 3H16.5Q17.9 3 17.9 4V16Q17.9 17 16.5 17H14Z" fill="#4a82c8"/><rect x="14" y="3" width="1.8" height="14" fill="#2b5aa0"/><path d="M4 3.5Q4 0 7.5 0H10.5Q14 0 14 3.5V16.5Q14 20 10.5 20H7.5Q4 20 4 16.5Z" fill="#3c72c0"/><path d="M4 3.5Q4 0 7.5 0H7V20H7.5Q4 20 4 16.5Z" fill="#2b5aa0"/><path d="M11 0H10.5Q14 0 14 3.5V16.5Q14 20 10.5 20H11Z" fill="#5b93d3"/></svg>
<div class="tx " style="left:1080.40px;top:509.79px;font-size:14.42px;letter-spacing:1.224px;color:#595959;font-weight:700;">Redshift Data Store 269</div>
<div class="tx " style="left:1300.30px;top:510.79px;font-size:14.42px;letter-spacing:1.027px;color:#595959;font-weight:700;">Redshift user dev-redshift-user@satoricyber.com is stale</div>
<div class="tx " style="left:1758.40px;top:510.79px;font-size:14.42px;letter-spacing:1.377px;color:#595959;font-weight:700;">Sep 03, 2025</div>
<div class="bx" style="left:1000px;top:570px;width:897px;height:2px;background:#f8f8f8"></div>
<svg class="ic" style="left:1013px;top:546px" width="13" height="16" viewBox="0 0 13 16"><path d="M6.5 0.2L0.3 2.6V7.4C0.3 11.3 2.9 14.9 6.5 15.8C10.1 14.9 12.7 11.3 12.7 7.4V2.6Z" fill="#e8890c"/><rect x="5.8" y="4.3" width="1.4" height="5" rx="0.5" fill="#fff"/><rect x="5.8" y="10.4" width="1.4" height="1.3" rx="0.4" fill="#fff"/></svg>
<svg class="ic" style="left:1051px;top:543px" width="18" height="20" viewBox="0 0 18 20"><path d="M0.2 4Q0.2 3 1.5 3H4V17H1.5Q0.2 17 0.2 16Z" fill="#5b93d3"/><path d="M0.2 4Q0.2 3 1.5 3H1.7V17H1.5Q0.2 17 0.2 16Z" fill="#2a5ea8"/><path d="M14 3H16.5Q17.9 3 17.9 4V16Q17.9 17 16.5 17H14Z" fill="#4a82c8"/><rect x="14" y="3" width="1.8" height="14" fill="#2b5aa0"/><path d="M4 3.5Q4 0 7.5 0H10.5Q14 0 14 3.5V16.5Q14 20 10.5 20H7.5Q4 20 4 16.5Z" fill="#3c72c0"/><path d="M4 3.5Q4 0 7.5 0H7V20H7.5Q4 20 4 16.5Z" fill="#2b5aa0"/><path d="M11 0H10.5Q14 0 14 3.5V16.5Q14 20 10.5 20H11Z" fill="#5b93d3"/></svg>
<div class="tx " style="left:1080.40px;top:545.79px;font-size:14.42px;letter-spacing:1.224px;color:#595959;font-weight:700;">Redshift Data Store 269</div>
<div class="tx " style="left:1300.30px;top:546.79px;font-size:14.42px;letter-spacing:1.098px;color:#595959;font-weight:700;">Redshift user evgeny+okta1@satoricyber.com is stale</div>
<div class="tx " style="left:1758.40px;top:546.79px;font-size:14.42px;letter-spacing:1.377px;color:#595959;font-weight:700;">Sep 03, 2025</div>
<div class="bx" style="left:1000px;top:606px;width:897px;height:2px;background:#f8f8f8"></div>
<svg class="ic" style="left:1013px;top:582px" width="13" height="16" viewBox="0 0 13 16"><path d="M6.5 0.2L0.3 2.6V7.4C0.3 11.3 2.9 14.9 6.5 15.8C10.1 14.9 12.7 11.3 12.7 7.4V2.6Z" fill="#e8890c"/><rect x="5.8" y="4.3" width="1.4" height="5" rx="0.5" fill="#fff"/><rect x="5.8" y="10.4" width="1.4" height="1.3" rx="0.4" fill="#fff"/></svg>
<svg class="ic" style="left:1051px;top:579px" width="18" height="20" viewBox="0 0 18 20"><path d="M0.2 4Q0.2 3 1.5 3H4V17H1.5Q0.2 17 0.2 16Z" fill="#5b93d3"/><path d="M0.2 4Q0.2 3 1.5 3H1.7V17H1.5Q0.2 17 0.2 16Z" fill="#2a5ea8"/><path d="M14 3H16.5Q17.9 3 17.9 4V16Q17.9 17 16.5 17H14Z" fill="#4a82c8"/><rect x="14" y="3" width="1.8" height="14" fill="#2b5aa0"/><path d="M4 3.5Q4 0 7.5 0H10.5Q14 0 14 3.5V16.5Q14 20 10.5 20H7.5Q4 20 4 16.5Z" fill="#3c72c0"/><path d="M4 3.5Q4 0 7.5 0H7V20H7.5Q4 20 4 16.5Z" fill="#2b5aa0"/><path d="M11 0H10.5Q14 0 14 3.5V16.5Q14 20 10.5 20H11Z" fill="#5b93d3"/></svg>
<div class="tx " style="left:1080.40px;top:581.79px;font-size:14.42px;letter-spacing:1.224px;color:#595959;font-weight:700;">Redshift Data Store 269</div>
<div class="tx " style="left:1300.30px;top:582.79px;font-size:14.42px;letter-spacing:0.968px;color:#595959;font-weight:700;">Redshift user satori_scanner is stale</div>
<div class="tx " style="left:1758.40px;top:582.79px;font-size:14.42px;letter-spacing:1.377px;color:#595959;font-weight:700;">Sep 03, 2025</div>
<div class="bx" style="left:1000px;top:642px;width:897px;height:2px;background:#f8f8f8"></div>
<svg class="ic" style="left:1013px;top:618px" width="13" height="16" viewBox="0 0 13 16"><path d="M6.5 0.2L0.3 2.6V7.4C0.3 11.3 2.9 14.9 6.5 15.8C10.1 14.9 12.7 11.3 12.7 7.4V2.6Z" fill="#e8890c"/><rect x="5.8" y="4.3" width="1.4" height="5" rx="0.5" fill="#fff"/><rect x="5.8" y="10.4" width="1.4" height="1.3" rx="0.4" fill="#fff"/></svg>
<svg class="ic" style="left:1051px;top:615px" width="18" height="20" viewBox="0 0 18 20"><path d="M0.2 4Q0.2 3 1.5 3H4V17H1.5Q0.2 17 0.2 16Z" fill="#5b93d3"/><path d="M0.2 4Q0.2 3 1.5 3H1.7V17H1.5Q0.2 17 0.2 16Z" fill="#2a5ea8"/><path d="M14 3H16.5Q17.9 3 17.9 4V16Q17.9 17 16.5 17H14Z" fill="#4a82c8"/><rect x="14" y="3" width="1.8" height="14" fill="#2b5aa0"/><path d="M4 3.5Q4 0 7.5 0H10.5Q14 0 14 3.5V16.5Q14 20 10.5 20H7.5Q4 20 4 16.5Z" fill="#3c72c0"/><path d="M4 3.5Q4 0 7.5 0H7V20H7.5Q4 20 4 16.5Z" fill="#2b5aa0"/><path d="M11 0H10.5Q14 0 14 3.5V16.5Q14 20 10.5 20H11Z" fill="#5b93d3"/></svg>
<div class="tx " style="left:1080.40px;top:617.79px;font-size:14.42px;letter-spacing:1.224px;color:#595959;font-weight:700;">Redshift Data Store 269</div>
<div class="tx " style="left:1300.30px;top:618.79px;font-size:14.42px;letter-spacing:0.944px;color:#595959;font-weight:700;">Redshift user avihai_role_1 is stale</div>
<div class="tx " style="left:1758.40px;top:618.79px;font-size:14.42px;letter-spacing:1.377px;color:#595959;font-weight:700;">Sep 03, 2025</div>
<div class="bx" style="left:1000px;top:678px;width:897px;height:2px;background:#f8f8f8"></div>
<svg class="ic" style="left:1013px;top:654px" width="13" height="16" viewBox="0 0 13 16"><path d="M6.5 0.2L0.3 2.6V7.4C0.3 11.3 2.9 14.9 6.5 15.8C10.1 14.9 12.7 11.3 12.7 7.4V2.6Z" fill="#e8890c"/><rect x="5.8" y="4.3" width="1.4" height="5" rx="0.5" fill="#fff"/><rect x="5.8" y="10.4" width="1.4" height="1.3" rx="0.4" fill="#fff"/></svg>
<svg class="ic" style="left:1051px;top:651px" width="18" height="20" viewBox="0 0 18 20"><path d="M0.2 4Q0.2 3 1.5 3H4V17H1.5Q0.2 17 0.2 16Z" fill="#5b93d3"/><path d="M0.2 4Q0.2 3 1.5 3H1.7V17H1.5Q0.2 17 0.2 16Z" fill="#2a5ea8"/><path d="M14 3H16.5Q17.9 3 17.9 4V16Q17.9 17 16.5 17H14Z" fill="#4a82c8"/><rect x="14" y="3" width="1.8" height="14" fill="#2b5aa0"/><path d="M4 3.5Q4 0 7.5 0H10.5Q14 0 14 3.5V16.5Q14 20 10.5 20H7.5Q4 20 4 16.5Z" fill="#3c72c0"/><path d="M4 3.5Q4 0 7.5 0H7V20H7.5Q4 20 4 16.5Z" fill="#2b5aa0"/><path d="M11 0H10.5Q14 0 14 3.5V16.5Q14 20 10.5 20H11Z" fill="#5b93d3"/></svg>
<div class="tx " style="left:1080.40px;top:653.79px;font-size:14.42px;letter-spacing:1.224px;color:#595959;font-weight:700;">Redshift Data Store 269</div>
<div class="tx " style="left:1300.30px;top:654.79px;font-size:14.42px;letter-spacing:0.988px;color:#595959;font-weight:700;">Redshift user avihai_2 is stale</div>
<div class="tx " style="left:1758.40px;top:654.79px;font-size:14.42px;letter-spacing:1.377px;color:#595959;font-weight:700;">Sep 03, 2025</div>
<div class="bx" style="left:1000px;top:714px;width:897px;height:2px;background:#f8f8f8"></div>
<svg class="ic" style="left:1013px;top:690px" width="13" height="16" viewBox="0 0 13 16"><path d="M6.5 0.2L0.3 2.6V7.4C0.3 11.3 2.9 14.9 6.5 15.8C10.1 14.9 12.7 11.3 12.7 7.4V2.6Z" fill="#e8890c"/><rect x="5.8" y="4.3" width="1.4" height="5" rx="0.5" fill="#fff"/><rect x="5.8" y="10.4" width="1.4" height="1.3" rx="0.4" fill="#fff"/></svg>
<svg class="ic" style="left:1051px;top:687px" width="18" height="20" viewBox="0 0 18 20"><path d="M0.2 4Q0.2 3 1.5 3H4V17H1.5Q0.2 17 0.2 16Z" fill="#5b93d3"/><path d="M0.2 4Q0.2 3 1.5 3H1.7V17H1.5Q0.2 17 0.2 16Z" fill="#2a5ea8"/><path d="M14 3H16.5Q17.9 3 17.9 4V16Q17.9 17 16.5 17H14Z" fill="#4a82c8"/><rect x="14" y="3" width="1.8" height="14" fill="#2b5aa0"/><path d="M4 3.5Q4 0 7.5 0H10.5Q14 0 14 3.5V16.5Q14 20 10.5 20H7.5Q4 20 4 16.5Z" fill="#3c72c0"/><path d="M4 3.5Q4 0 7.5 0H7V20H7.5Q4 20 4 16.5Z" fill="#2b5aa0"/><path d="M11 0H10.5Q14 0 14 3.5V16.5Q14 20 10.5 20H11Z" fill="#5b93d3"/></svg>
<div class="tx " style="left:1080.40px;top:689.79px;font-size:14.42px;letter-spacing:1.224px;color:#595959;font-weight:700;">Redshift Data Store 269</div>
<div class="tx " style="left:1300.30px;top:690.79px;font-size:14.42px;letter-spacing:1.004px;color:#595959;font-weight:700;">Redshift user tomer.shani@satoricyber.com is stale</div>
<div class="tx " style="left:1758.40px;top:690.79px;font-size:14.42px;letter-spacing:1.377px;color:#595959;font-weight:700;">Sep 03, 2025</div>
<div class="bx" style="left:1000px;top:750px;width:897px;height:2px;background:#f8f8f8"></div>
<svg class="ic" style="left:1013px;top:726px" width="13" height="16" viewBox="0 0 13 16"><path d="M6.5 0.2L0.3 2.6V7.4C0.3 11.3 2.9 14.9 6.5 15.8C10.1 14.9 12.7 11.3 12.7 7.4V2.6Z" fill="#e8890c"/><rect x="5.8" y="4.3" width="1.4" height="5" rx="0.5" fill="#fff"/><rect x="5.8" y="10.4" width="1.4" height="1.3" rx="0.4" fill="#fff"/></svg>
<svg class="ic" style="left:1051px;top:723px" width="18" height="20" viewBox="0 0 18 20"><path d="M0.2 4Q0.2 3 1.5 3H4V17H1.5Q0.2 17 0.2 16Z" fill="#5b93d3"/><path d="M0.2 4Q0.2 3 1.5 3H1.7V17H1.5Q0.2 17 0.2 16Z" fill="#2a5ea8"/><path d="M14 3H16.5Q17.9 3 17.9 4V16Q17.9 17 16.5 17H14Z" fill="#4a82c8"/><rect x="14" y="3" width="1.8" height="14" fill="#2b5aa0"/><path d="M4 3.5Q4 0 7.5 0H10.5Q14 0 14 3.5V16.5Q14 20 10.5 20H7.5Q4 20 4 16.5Z" fill="#3c72c0"/><path d="M4 3.5Q4 0 7.5 0H7V20H7.5Q4 20 4 16.5Z" fill="#2b5aa0"/><path d="M11 0H10.5Q14 0 14 3.5V16.5Q14 20 10.5 20H11Z" fill="#5b93d3"/></svg>
<div class="tx " style="left:1080.40px;top:725.79px;font-size:14.42px;letter-spacing:1.224px;color:#595959;font-weight:700;">Redshift Data Store 269</div>
<div class="tx " style="left:1300.30px;top:726.79px;font-size:14.42px;letter-spacing:1.000px;color:#595959;font-weight:700;">Redshift user alexk@satoricyber.com is stale</div>
<div class="tx " style="left:1758.40px;top:726.79px;font-size:14.42px;letter-spacing:1.377px;color:#595959;font-weight:700;">Sep 03, 2025</div>
<div class="bx" style="left:319px;top:325px;width:250px;height:320px;background:#2e2e2e;border-radius:4px;box-shadow:0 4px 11px rgba(0,0,0,0.48)"></div>
<svg class="ic" style="left:393px;top:312px" width="27" height="14" viewBox="0 0 27 14"><path d="M0 14L13.5 0.5L27 14Z" fill="#2e2e2e"/></svg>
<div class="tx " style="left:339.40px;top:348.79px;font-size:14.42px;letter-spacing:0.565px;color:#ffffff;">Discovered Data Stores</div>
<div class="tx " style="left:361.50px;top:380.09px;font-size:14.42px;letter-spacing:0.600px;color:#c483dd;">Snowflake (13)</div>
<svg class="ic" style="left:339px;top:379.8px" width="15" height="15" viewBox="0 0 20 20"><g><path transform="rotate(0 10 10)" d="M18.68 7.7L14.7 10L18.68 12.3" fill="none" stroke="#3db5ea" stroke-width="2.6" stroke-linecap="round" stroke-linejoin="round"/><path transform="rotate(60 10 10)" d="M18.68 7.7L14.7 10L18.68 12.3" fill="none" stroke="#3db5ea" stroke-width="2.6" stroke-linecap="round" stroke-linejoin="round"/><path transform="rotate(120 10 10)" d="M18.68 7.7L14.7 10L18.68 12.3" fill="none" stroke="#3db5ea" stroke-width="2.6" stroke-linecap="round" stroke-linejoin="round"/><path transform="rotate(180 10 10)" d="M18.68 7.7L14.7 10L18.68 12.3" fill="none" stroke="#3db5ea" stroke-width="2.6" stroke-linecap="round" stroke-linejoin="round"/><path transform="rotate(240 10 10)" d="M18.68 7.7L14.7 10L18.68 12.3" fill="none" stroke="#3db5ea" stroke-width="2.6" stroke-linecap="round" stroke-linejoin="round"/><path transform="rotate(300 10 10)" d="M18.68 7.7L14.7 10L18.68 12.3" fill="none" stroke="#3db5ea" stroke-width="2.6" stroke-linecap="round" stroke-linejoin="round"/></g><path d="M10 8L12 10L10 12L8 10Z" fill="#3db5ea"/></svg>
<div class="tx " style="left:361.50px;top:411.09px;font-size:14.42px;letter-spacing:0.622px;color:#c483dd;">BigQuery (7)</div>
<svg class="ic" style="left:339px;top:410.8px" width="15" height="15" viewBox="0 0 15 15"><path d="M3.8 1H11.2L14.8 7.5L11.2 14H3.8L0.2 7.5Z" fill="#4a7ef0"/><circle cx="7.2" cy="7.2" r="2.3" fill="none" stroke="#fff" stroke-width="1"/><path d="M8.8 8.8L10.3 10.3" stroke="#fff" stroke-width="1.1"/></svg>
<div class="tx " style="left:361.50px;top:442.09px;font-size:14.42px;letter-spacing:0.327px;color:#c483dd;">PostgreSQL (2)</div>
<svg class="ic" style="left:339px;top:441.8px" width="15" height="15" viewBox="0 0 15 15"><path d="M2.5 1C5 0.2 10 0.2 12.8 1C14.8 2 14.8 5 14 7C13.2 8.8 11.8 9.4 10.8 9.5V13.2C10.8 14.8 8.2 14.8 8.2 13.2V10.4C6.2 10.4 4.6 10 3.6 9C2.2 10 1.1 9.2 0.8 7.5C0.3 5 0.6 2 2.5 1Z" fill="#336791" stroke="#fff" stroke-width="0.9"/><path d="M5.2 3.2V8.2M10.8 3.8V9.5" stroke="#fff" stroke-width="0.7" fill="none"/></svg>
<div class="tx " style="left:361.50px;top:473.09px;font-size:14.42px;letter-spacing:0.607px;color:#c483dd;">Bedrock (2)</div>
<svg class="ic" style="left:339px;top:472.8px" width="15" height="15" viewBox="0 0 15 15"><g fill="none" stroke="#2f9e77" stroke-width="1"><path d="M7.2 1.5C5.5 0.8 3.8 1.2 3.2 2.6C1.6 2.8 1 4.4 1.6 5.6C0.4 6.6 0.6 8.6 1.8 9.2C1.4 10.8 2.4 12.2 3.8 12.2C4.4 13.6 6 14 7.2 13.4Z"/><path d="M3.6 4.5C4.8 4.5 5.5 5.4 5.5 6.4M2.6 8C3.8 7.8 4.8 8.6 5.6 9.4M4.5 11.5C5.2 10.8 6.2 10.8 7.2 11"/><path d="M7.2 4.5H9.8L11 3M7.2 7.3H13M7.2 10.2H9.8L11 11.8"/></g><g fill="#2f9e77"><circle cx="11.5" cy="2.6" r="1.1"/><circle cx="13.6" cy="7.3" r="1.1"/><circle cx="11.5" cy="12.2" r="1.1"/></g></svg>
<div class="tx " style="left:361.50px;top:504.09px;font-size:14.42px;letter-spacing:0.468px;color:#c483dd;">Azure OpenAI (2)</div>
<svg class="ic" style="left:339px;top:503.79999999999995px" width="16" height="16" viewBox="0 0 16 16"><g fill="none" stroke="#3f6fe0" stroke-width="1.1"><path d="M8 1.2C4.2 1.2 1.2 4.2 1.2 8C1.2 11.6 4 14.6 7.6 14.8"/><path d="M8 3.4C5.4 3.4 3.4 5.4 3.4 8C3.4 10.4 5.2 12.4 7.6 12.6"/><path d="M8 5.6C6.6 5.6 5.6 6.8 5.6 8C5.6 9.3 6.5 10.3 7.6 10.4"/><path d="M8 1.2C11.2 1.2 13.8 3.4 14.5 6.4"/><path d="M8 3.4C10.2 3.4 12 4.8 12.4 6.8"/></g><path d="M8.6 5.2L10.6 5L15 15.2H12.4Z" fill="#4fb0f0"/><path d="M8.6 5.2L10.6 5L11.4 7L9.6 7.8Z" fill="#2f68d0"/></svg>
<div class="tx " style="left:361.50px;top:535.09px;font-size:14.42px;letter-spacing:0.535px;color:#c483dd;">MongoDB (2)</div>
<svg class="ic" style="left:339px;top:534.8px" width="15" height="15" viewBox="0 0 15 15"><path d="M7.5 0.3C10.2 3 11.2 5.6 11.2 7.8C11.2 10.6 9.2 12.4 7.9 13V15.2H7.1V13C5.8 12.4 3.8 10.6 3.8 7.8C3.8 5.6 4.8 3 7.5 0.3Z" fill="#5fa33a"/><path d="M7.5 2V13" stroke="#4a8a2c" stroke-width="0.5"/></svg>
<div class="tx " style="left:361.50px;top:566.09px;font-size:14.42px;letter-spacing:0.685px;color:#c483dd;">Databricks (1)</div>
<svg class="ic" style="left:339px;top:565.8px" width="16" height="16" viewBox="0 0 16 16"><g fill="none" stroke="#e0432d" stroke-width="1.1" stroke-linejoin="round"><path d="M8 1L15 5L8 9L1 5Z"/><path d="M1 5V7L8 11L15 7V5"/><path d="M1 7V9.2L8 13.2L15 9.2V7"/><path d="M1 9.2V11.2L8 15.2L15 11.2V9.2"/></g></svg>
<div class="tx " style="left:361.50px;top:597.09px;font-size:14.42px;letter-spacing:0.541px;color:#c483dd;">Synapse (1)</div>
<svg class="ic" style="left:339px;top:596.8px" width="15" height="16" viewBox="0 0 15 16"><path d="M7.5 0.8L14 4.4V11.6L7.5 15.2L1 11.6V4.4Z" fill="none" stroke="#2a86e8" stroke-width="1.2"/><path d="M10.8 4L5 6.6L10.2 9.4L4.4 12.2" fill="none" stroke="#50e0f0" stroke-width="1.3" stroke-linejoin="round"/><circle cx="5" cy="6.6" r="1.3" fill="#50e0f0"/><circle cx="10.2" cy="9.4" r="1.3" fill="#50e0f0"/></svg>
</div></body></html>
